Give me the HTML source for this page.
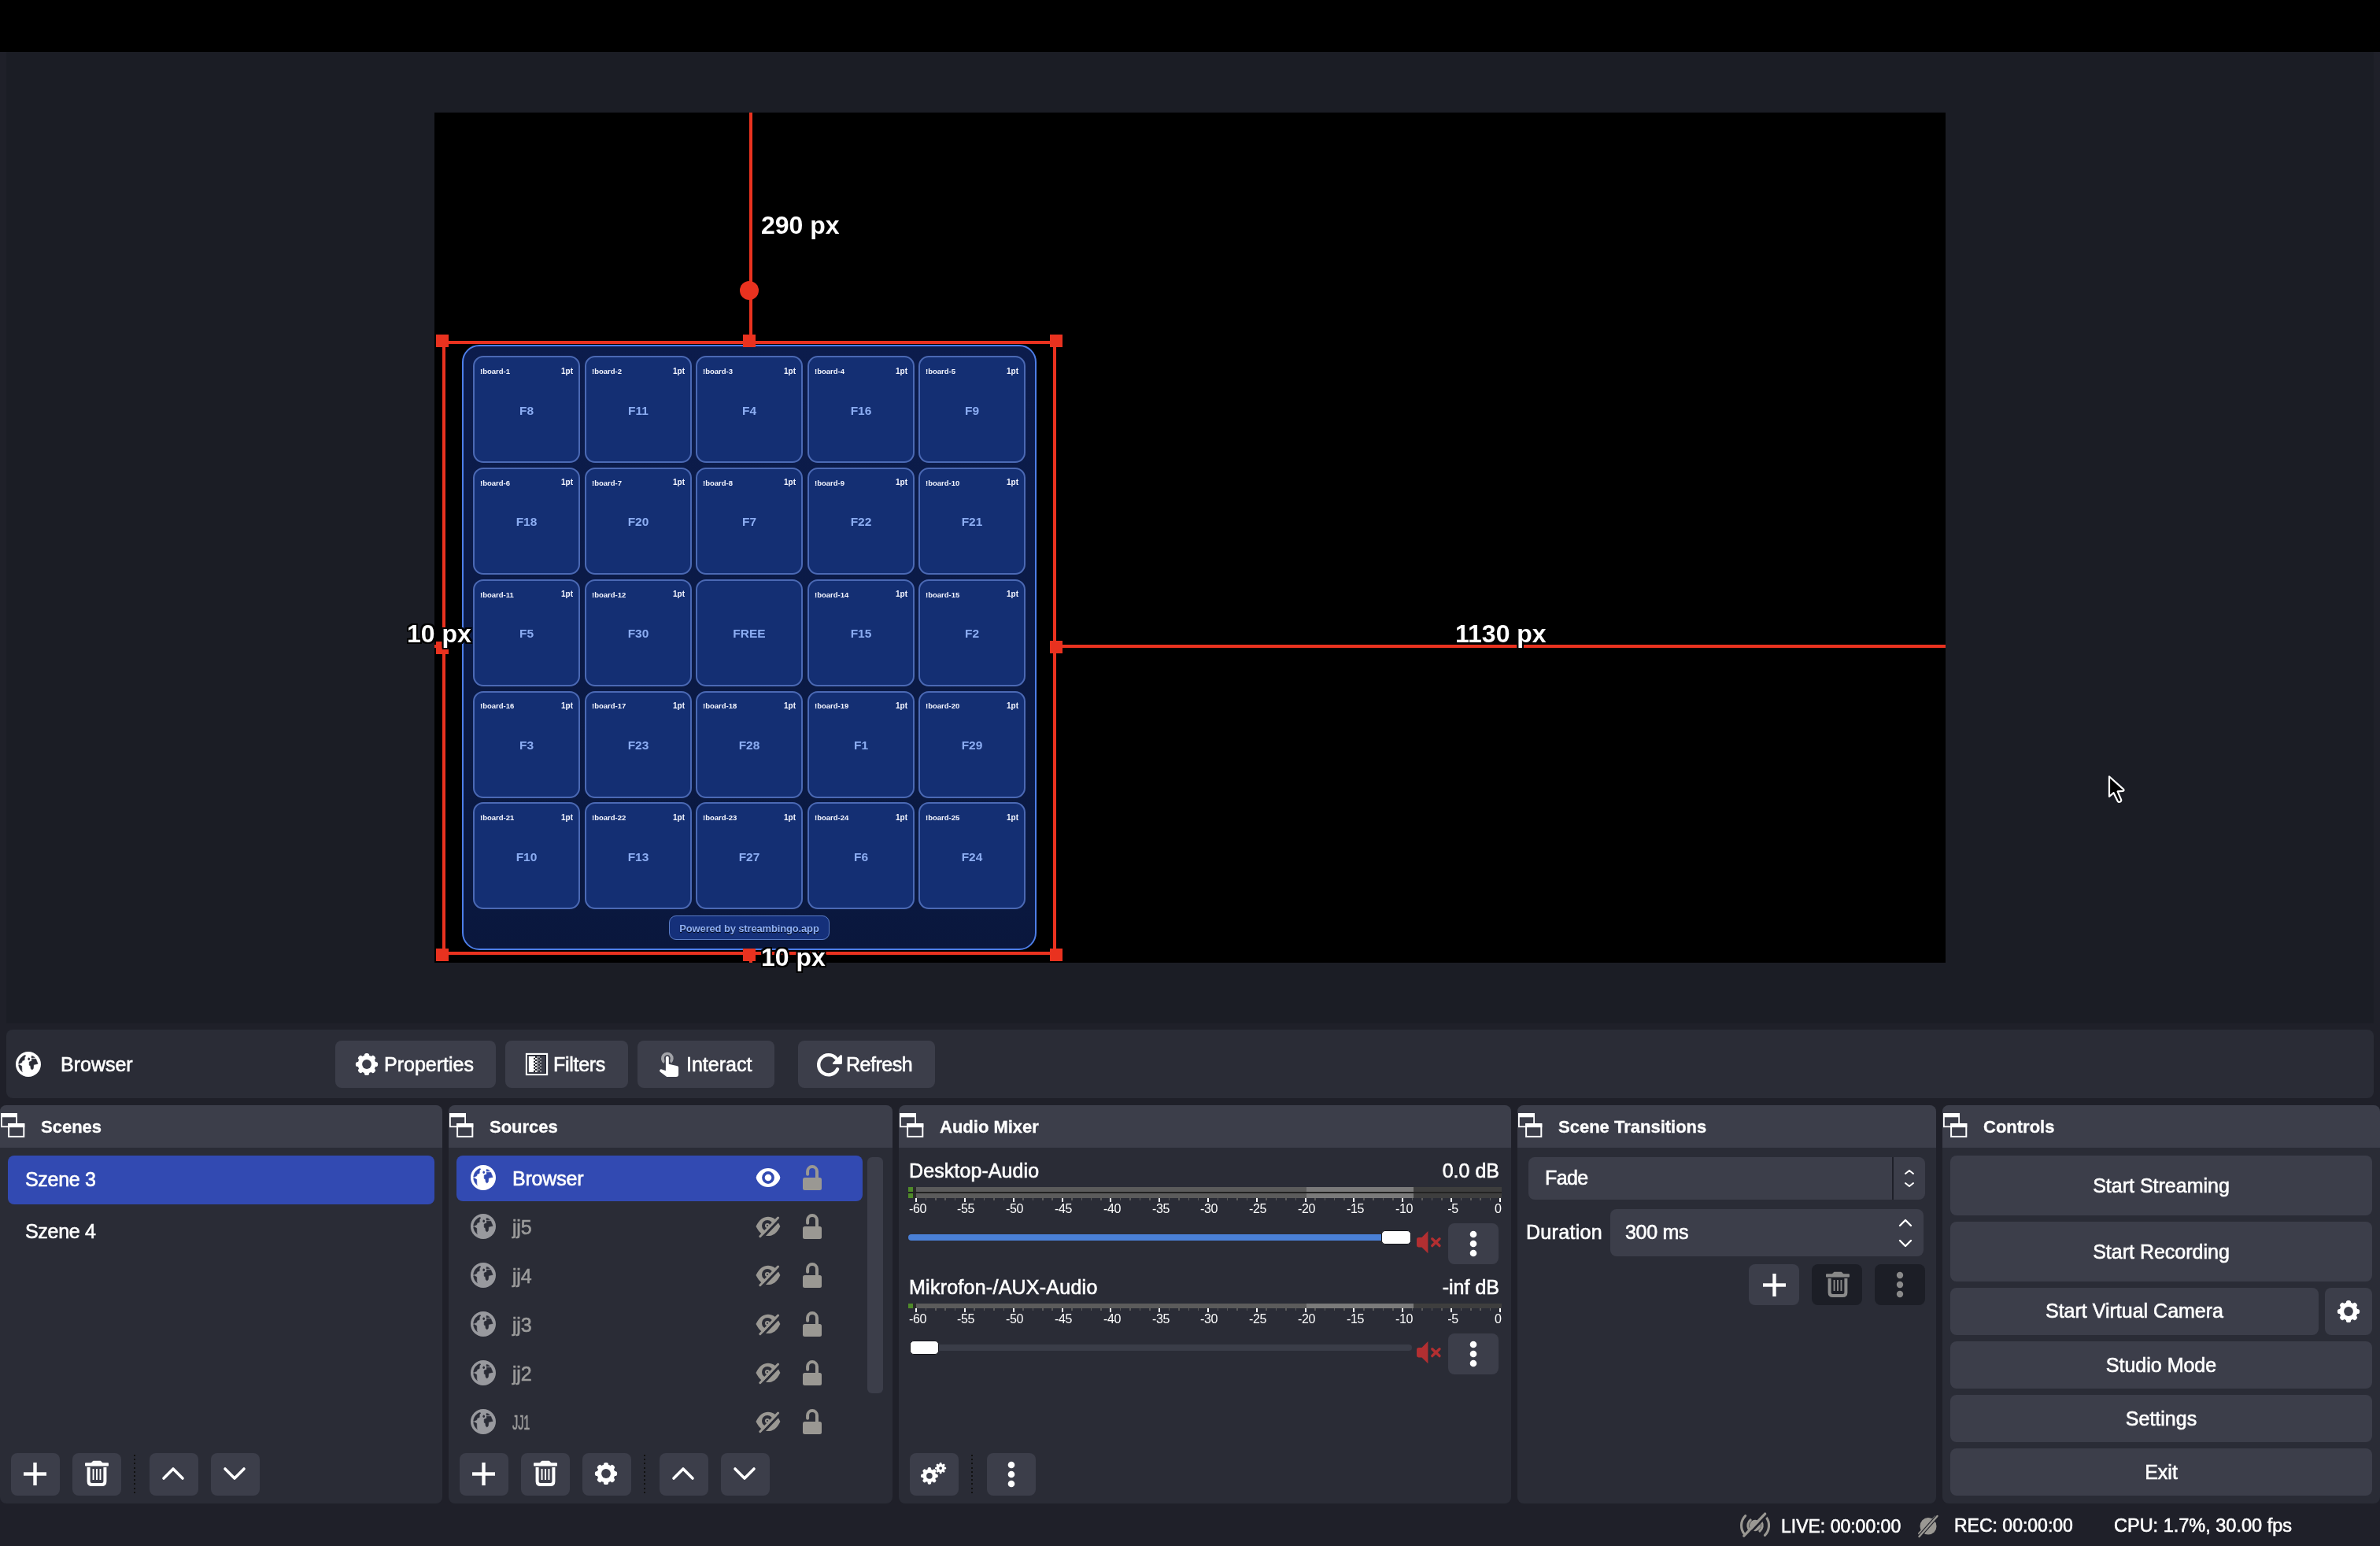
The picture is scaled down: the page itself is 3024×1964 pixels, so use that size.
<!DOCTYPE html><html><head><meta charset="utf-8"><style>
html,body{margin:0;padding:0;}
body{width:3024px;height:1964px;overflow:hidden;position:relative;background:#1f2029;font-family:'Liberation Sans', sans-serif;}
div,svg{box-sizing:border-box;}
</style></head><body>
<div style="position:absolute;left:0px;top:0px;width:3024px;height:66px;background:#000;border-radius:0px;"></div>
<div style="position:absolute;left:8px;top:66px;width:3008px;height:1234px;background:#1b1d25;border-radius:0px;"></div>
<div style="position:absolute;left:552px;top:143px;width:1920px;height:1080px;background:#000;border-radius:0px;"></div>
<div style="position:absolute;left:587px;top:438px;width:730px;height:769px;border:2.5px solid #4d7ee8;border-radius:22px;background:linear-gradient(#0c1c4c,#0a1941 85%,#0a173d);"></div>
<div style="position:absolute;left:601.0px;top:452.4px;width:136px;height:136px;border:2px solid #4b69b4;border-radius:13px;background:#142f73;"></div>
<div style="position:absolute;left:610.0px;top:467.16px;font:bold 9.5px/9.5px 'Liberation Sans', sans-serif;color:#f4f6ff;white-space:nowrap;will-change:transform;">!board-1</div>
<div style="position:absolute;left:128.0px;width:600px;top:466.74px;font:bold 10px/10px 'Liberation Sans', sans-serif;color:#f4f6ff;text-align:right;white-space:nowrap;will-change:transform;">1pt</div>
<div style="position:absolute;left:269.0px;width:800px;top:513.78px;font:bold 15.5px/15.5px 'Liberation Sans', sans-serif;color:#8cadf2;text-align:center;white-space:nowrap;will-change:transform;">F8</div>
<div style="position:absolute;left:742.5px;top:452.4px;width:136px;height:136px;border:2px solid #4b69b4;border-radius:13px;background:#142f73;"></div>
<div style="position:absolute;left:751.5px;top:467.16px;font:bold 9.5px/9.5px 'Liberation Sans', sans-serif;color:#f4f6ff;white-space:nowrap;will-change:transform;">!board-2</div>
<div style="position:absolute;left:269.5px;width:600px;top:466.74px;font:bold 10px/10px 'Liberation Sans', sans-serif;color:#f4f6ff;text-align:right;white-space:nowrap;will-change:transform;">1pt</div>
<div style="position:absolute;left:410.5px;width:800px;top:513.78px;font:bold 15.5px/15.5px 'Liberation Sans', sans-serif;color:#8cadf2;text-align:center;white-space:nowrap;will-change:transform;">F11</div>
<div style="position:absolute;left:884.0px;top:452.4px;width:136px;height:136px;border:2px solid #4b69b4;border-radius:13px;background:#142f73;"></div>
<div style="position:absolute;left:893.0px;top:467.16px;font:bold 9.5px/9.5px 'Liberation Sans', sans-serif;color:#f4f6ff;white-space:nowrap;will-change:transform;">!board-3</div>
<div style="position:absolute;left:411.0px;width:600px;top:466.74px;font:bold 10px/10px 'Liberation Sans', sans-serif;color:#f4f6ff;text-align:right;white-space:nowrap;will-change:transform;">1pt</div>
<div style="position:absolute;left:552.0px;width:800px;top:513.78px;font:bold 15.5px/15.5px 'Liberation Sans', sans-serif;color:#8cadf2;text-align:center;white-space:nowrap;will-change:transform;">F4</div>
<div style="position:absolute;left:1025.5px;top:452.4px;width:136px;height:136px;border:2px solid #4b69b4;border-radius:13px;background:#142f73;"></div>
<div style="position:absolute;left:1034.5px;top:467.16px;font:bold 9.5px/9.5px 'Liberation Sans', sans-serif;color:#f4f6ff;white-space:nowrap;will-change:transform;">!board-4</div>
<div style="position:absolute;left:552.5px;width:600px;top:466.74px;font:bold 10px/10px 'Liberation Sans', sans-serif;color:#f4f6ff;text-align:right;white-space:nowrap;will-change:transform;">1pt</div>
<div style="position:absolute;left:693.5px;width:800px;top:513.78px;font:bold 15.5px/15.5px 'Liberation Sans', sans-serif;color:#8cadf2;text-align:center;white-space:nowrap;will-change:transform;">F16</div>
<div style="position:absolute;left:1167.0px;top:452.4px;width:136px;height:136px;border:2px solid #4b69b4;border-radius:13px;background:#142f73;"></div>
<div style="position:absolute;left:1176.0px;top:467.16px;font:bold 9.5px/9.5px 'Liberation Sans', sans-serif;color:#f4f6ff;white-space:nowrap;will-change:transform;">!board-5</div>
<div style="position:absolute;left:694.0px;width:600px;top:466.74px;font:bold 10px/10px 'Liberation Sans', sans-serif;color:#f4f6ff;text-align:right;white-space:nowrap;will-change:transform;">1pt</div>
<div style="position:absolute;left:835.0px;width:800px;top:513.78px;font:bold 15.5px/15.5px 'Liberation Sans', sans-serif;color:#8cadf2;text-align:center;white-space:nowrap;will-change:transform;">F9</div>
<div style="position:absolute;left:601.0px;top:594.1px;width:136px;height:136px;border:2px solid #4b69b4;border-radius:13px;background:#142f73;"></div>
<div style="position:absolute;left:610.0px;top:608.86px;font:bold 9.5px/9.5px 'Liberation Sans', sans-serif;color:#f4f6ff;white-space:nowrap;will-change:transform;">!board-6</div>
<div style="position:absolute;left:128.0px;width:600px;top:608.43px;font:bold 10px/10px 'Liberation Sans', sans-serif;color:#f4f6ff;text-align:right;white-space:nowrap;will-change:transform;">1pt</div>
<div style="position:absolute;left:269.0px;width:800px;top:655.48px;font:bold 15.5px/15.5px 'Liberation Sans', sans-serif;color:#8cadf2;text-align:center;white-space:nowrap;will-change:transform;">F18</div>
<div style="position:absolute;left:742.5px;top:594.1px;width:136px;height:136px;border:2px solid #4b69b4;border-radius:13px;background:#142f73;"></div>
<div style="position:absolute;left:751.5px;top:608.86px;font:bold 9.5px/9.5px 'Liberation Sans', sans-serif;color:#f4f6ff;white-space:nowrap;will-change:transform;">!board-7</div>
<div style="position:absolute;left:269.5px;width:600px;top:608.43px;font:bold 10px/10px 'Liberation Sans', sans-serif;color:#f4f6ff;text-align:right;white-space:nowrap;will-change:transform;">1pt</div>
<div style="position:absolute;left:410.5px;width:800px;top:655.48px;font:bold 15.5px/15.5px 'Liberation Sans', sans-serif;color:#8cadf2;text-align:center;white-space:nowrap;will-change:transform;">F20</div>
<div style="position:absolute;left:884.0px;top:594.1px;width:136px;height:136px;border:2px solid #4b69b4;border-radius:13px;background:#142f73;"></div>
<div style="position:absolute;left:893.0px;top:608.86px;font:bold 9.5px/9.5px 'Liberation Sans', sans-serif;color:#f4f6ff;white-space:nowrap;will-change:transform;">!board-8</div>
<div style="position:absolute;left:411.0px;width:600px;top:608.43px;font:bold 10px/10px 'Liberation Sans', sans-serif;color:#f4f6ff;text-align:right;white-space:nowrap;will-change:transform;">1pt</div>
<div style="position:absolute;left:552.0px;width:800px;top:655.48px;font:bold 15.5px/15.5px 'Liberation Sans', sans-serif;color:#8cadf2;text-align:center;white-space:nowrap;will-change:transform;">F7</div>
<div style="position:absolute;left:1025.5px;top:594.1px;width:136px;height:136px;border:2px solid #4b69b4;border-radius:13px;background:#142f73;"></div>
<div style="position:absolute;left:1034.5px;top:608.86px;font:bold 9.5px/9.5px 'Liberation Sans', sans-serif;color:#f4f6ff;white-space:nowrap;will-change:transform;">!board-9</div>
<div style="position:absolute;left:552.5px;width:600px;top:608.43px;font:bold 10px/10px 'Liberation Sans', sans-serif;color:#f4f6ff;text-align:right;white-space:nowrap;will-change:transform;">1pt</div>
<div style="position:absolute;left:693.5px;width:800px;top:655.48px;font:bold 15.5px/15.5px 'Liberation Sans', sans-serif;color:#8cadf2;text-align:center;white-space:nowrap;will-change:transform;">F22</div>
<div style="position:absolute;left:1167.0px;top:594.1px;width:136px;height:136px;border:2px solid #4b69b4;border-radius:13px;background:#142f73;"></div>
<div style="position:absolute;left:1176.0px;top:608.86px;font:bold 9.5px/9.5px 'Liberation Sans', sans-serif;color:#f4f6ff;white-space:nowrap;will-change:transform;">!board-10</div>
<div style="position:absolute;left:694.0px;width:600px;top:608.43px;font:bold 10px/10px 'Liberation Sans', sans-serif;color:#f4f6ff;text-align:right;white-space:nowrap;will-change:transform;">1pt</div>
<div style="position:absolute;left:835.0px;width:800px;top:655.48px;font:bold 15.5px/15.5px 'Liberation Sans', sans-serif;color:#8cadf2;text-align:center;white-space:nowrap;will-change:transform;">F21</div>
<div style="position:absolute;left:601.0px;top:735.8px;width:136px;height:136px;border:2px solid #4b69b4;border-radius:13px;background:#142f73;"></div>
<div style="position:absolute;left:610.0px;top:750.56px;font:bold 9.5px/9.5px 'Liberation Sans', sans-serif;color:#f4f6ff;white-space:nowrap;will-change:transform;">!board-11</div>
<div style="position:absolute;left:128.0px;width:600px;top:750.13px;font:bold 10px/10px 'Liberation Sans', sans-serif;color:#f4f6ff;text-align:right;white-space:nowrap;will-change:transform;">1pt</div>
<div style="position:absolute;left:269.0px;width:800px;top:797.18px;font:bold 15.5px/15.5px 'Liberation Sans', sans-serif;color:#8cadf2;text-align:center;white-space:nowrap;will-change:transform;">F5</div>
<div style="position:absolute;left:742.5px;top:735.8px;width:136px;height:136px;border:2px solid #4b69b4;border-radius:13px;background:#142f73;"></div>
<div style="position:absolute;left:751.5px;top:750.56px;font:bold 9.5px/9.5px 'Liberation Sans', sans-serif;color:#f4f6ff;white-space:nowrap;will-change:transform;">!board-12</div>
<div style="position:absolute;left:269.5px;width:600px;top:750.13px;font:bold 10px/10px 'Liberation Sans', sans-serif;color:#f4f6ff;text-align:right;white-space:nowrap;will-change:transform;">1pt</div>
<div style="position:absolute;left:410.5px;width:800px;top:797.18px;font:bold 15.5px/15.5px 'Liberation Sans', sans-serif;color:#8cadf2;text-align:center;white-space:nowrap;will-change:transform;">F30</div>
<div style="position:absolute;left:884.0px;top:735.8px;width:136px;height:136px;border:2px solid #4b69b4;border-radius:13px;background:#142f73;"></div>
<div style="position:absolute;left:552.0px;width:800px;top:797.18px;font:bold 15.5px/15.5px 'Liberation Sans', sans-serif;color:#8cadf2;text-align:center;white-space:nowrap;will-change:transform;">FREE</div>
<div style="position:absolute;left:1025.5px;top:735.8px;width:136px;height:136px;border:2px solid #4b69b4;border-radius:13px;background:#142f73;"></div>
<div style="position:absolute;left:1034.5px;top:750.56px;font:bold 9.5px/9.5px 'Liberation Sans', sans-serif;color:#f4f6ff;white-space:nowrap;will-change:transform;">!board-14</div>
<div style="position:absolute;left:552.5px;width:600px;top:750.13px;font:bold 10px/10px 'Liberation Sans', sans-serif;color:#f4f6ff;text-align:right;white-space:nowrap;will-change:transform;">1pt</div>
<div style="position:absolute;left:693.5px;width:800px;top:797.18px;font:bold 15.5px/15.5px 'Liberation Sans', sans-serif;color:#8cadf2;text-align:center;white-space:nowrap;will-change:transform;">F15</div>
<div style="position:absolute;left:1167.0px;top:735.8px;width:136px;height:136px;border:2px solid #4b69b4;border-radius:13px;background:#142f73;"></div>
<div style="position:absolute;left:1176.0px;top:750.56px;font:bold 9.5px/9.5px 'Liberation Sans', sans-serif;color:#f4f6ff;white-space:nowrap;will-change:transform;">!board-15</div>
<div style="position:absolute;left:694.0px;width:600px;top:750.13px;font:bold 10px/10px 'Liberation Sans', sans-serif;color:#f4f6ff;text-align:right;white-space:nowrap;will-change:transform;">1pt</div>
<div style="position:absolute;left:835.0px;width:800px;top:797.18px;font:bold 15.5px/15.5px 'Liberation Sans', sans-serif;color:#8cadf2;text-align:center;white-space:nowrap;will-change:transform;">F2</div>
<div style="position:absolute;left:601.0px;top:877.5px;width:136px;height:136px;border:2px solid #4b69b4;border-radius:13px;background:#142f73;"></div>
<div style="position:absolute;left:610.0px;top:892.26px;font:bold 9.5px/9.5px 'Liberation Sans', sans-serif;color:#f4f6ff;white-space:nowrap;will-change:transform;">!board-16</div>
<div style="position:absolute;left:128.0px;width:600px;top:891.83px;font:bold 10px/10px 'Liberation Sans', sans-serif;color:#f4f6ff;text-align:right;white-space:nowrap;will-change:transform;">1pt</div>
<div style="position:absolute;left:269.0px;width:800px;top:938.88px;font:bold 15.5px/15.5px 'Liberation Sans', sans-serif;color:#8cadf2;text-align:center;white-space:nowrap;will-change:transform;">F3</div>
<div style="position:absolute;left:742.5px;top:877.5px;width:136px;height:136px;border:2px solid #4b69b4;border-radius:13px;background:#142f73;"></div>
<div style="position:absolute;left:751.5px;top:892.26px;font:bold 9.5px/9.5px 'Liberation Sans', sans-serif;color:#f4f6ff;white-space:nowrap;will-change:transform;">!board-17</div>
<div style="position:absolute;left:269.5px;width:600px;top:891.83px;font:bold 10px/10px 'Liberation Sans', sans-serif;color:#f4f6ff;text-align:right;white-space:nowrap;will-change:transform;">1pt</div>
<div style="position:absolute;left:410.5px;width:800px;top:938.88px;font:bold 15.5px/15.5px 'Liberation Sans', sans-serif;color:#8cadf2;text-align:center;white-space:nowrap;will-change:transform;">F23</div>
<div style="position:absolute;left:884.0px;top:877.5px;width:136px;height:136px;border:2px solid #4b69b4;border-radius:13px;background:#142f73;"></div>
<div style="position:absolute;left:893.0px;top:892.26px;font:bold 9.5px/9.5px 'Liberation Sans', sans-serif;color:#f4f6ff;white-space:nowrap;will-change:transform;">!board-18</div>
<div style="position:absolute;left:411.0px;width:600px;top:891.83px;font:bold 10px/10px 'Liberation Sans', sans-serif;color:#f4f6ff;text-align:right;white-space:nowrap;will-change:transform;">1pt</div>
<div style="position:absolute;left:552.0px;width:800px;top:938.88px;font:bold 15.5px/15.5px 'Liberation Sans', sans-serif;color:#8cadf2;text-align:center;white-space:nowrap;will-change:transform;">F28</div>
<div style="position:absolute;left:1025.5px;top:877.5px;width:136px;height:136px;border:2px solid #4b69b4;border-radius:13px;background:#142f73;"></div>
<div style="position:absolute;left:1034.5px;top:892.26px;font:bold 9.5px/9.5px 'Liberation Sans', sans-serif;color:#f4f6ff;white-space:nowrap;will-change:transform;">!board-19</div>
<div style="position:absolute;left:552.5px;width:600px;top:891.83px;font:bold 10px/10px 'Liberation Sans', sans-serif;color:#f4f6ff;text-align:right;white-space:nowrap;will-change:transform;">1pt</div>
<div style="position:absolute;left:693.5px;width:800px;top:938.88px;font:bold 15.5px/15.5px 'Liberation Sans', sans-serif;color:#8cadf2;text-align:center;white-space:nowrap;will-change:transform;">F1</div>
<div style="position:absolute;left:1167.0px;top:877.5px;width:136px;height:136px;border:2px solid #4b69b4;border-radius:13px;background:#142f73;"></div>
<div style="position:absolute;left:1176.0px;top:892.26px;font:bold 9.5px/9.5px 'Liberation Sans', sans-serif;color:#f4f6ff;white-space:nowrap;will-change:transform;">!board-20</div>
<div style="position:absolute;left:694.0px;width:600px;top:891.83px;font:bold 10px/10px 'Liberation Sans', sans-serif;color:#f4f6ff;text-align:right;white-space:nowrap;will-change:transform;">1pt</div>
<div style="position:absolute;left:835.0px;width:800px;top:938.88px;font:bold 15.5px/15.5px 'Liberation Sans', sans-serif;color:#8cadf2;text-align:center;white-space:nowrap;will-change:transform;">F29</div>
<div style="position:absolute;left:601.0px;top:1019.2px;width:136px;height:136px;border:2px solid #4b69b4;border-radius:13px;background:#142f73;"></div>
<div style="position:absolute;left:610.0px;top:1033.96px;font:bold 9.5px/9.5px 'Liberation Sans', sans-serif;color:#f4f6ff;white-space:nowrap;will-change:transform;">!board-21</div>
<div style="position:absolute;left:128.0px;width:600px;top:1033.54px;font:bold 10px/10px 'Liberation Sans', sans-serif;color:#f4f6ff;text-align:right;white-space:nowrap;will-change:transform;">1pt</div>
<div style="position:absolute;left:269.0px;width:800px;top:1080.58px;font:bold 15.5px/15.5px 'Liberation Sans', sans-serif;color:#8cadf2;text-align:center;white-space:nowrap;will-change:transform;">F10</div>
<div style="position:absolute;left:742.5px;top:1019.2px;width:136px;height:136px;border:2px solid #4b69b4;border-radius:13px;background:#142f73;"></div>
<div style="position:absolute;left:751.5px;top:1033.96px;font:bold 9.5px/9.5px 'Liberation Sans', sans-serif;color:#f4f6ff;white-space:nowrap;will-change:transform;">!board-22</div>
<div style="position:absolute;left:269.5px;width:600px;top:1033.54px;font:bold 10px/10px 'Liberation Sans', sans-serif;color:#f4f6ff;text-align:right;white-space:nowrap;will-change:transform;">1pt</div>
<div style="position:absolute;left:410.5px;width:800px;top:1080.58px;font:bold 15.5px/15.5px 'Liberation Sans', sans-serif;color:#8cadf2;text-align:center;white-space:nowrap;will-change:transform;">F13</div>
<div style="position:absolute;left:884.0px;top:1019.2px;width:136px;height:136px;border:2px solid #4b69b4;border-radius:13px;background:#142f73;"></div>
<div style="position:absolute;left:893.0px;top:1033.96px;font:bold 9.5px/9.5px 'Liberation Sans', sans-serif;color:#f4f6ff;white-space:nowrap;will-change:transform;">!board-23</div>
<div style="position:absolute;left:411.0px;width:600px;top:1033.54px;font:bold 10px/10px 'Liberation Sans', sans-serif;color:#f4f6ff;text-align:right;white-space:nowrap;will-change:transform;">1pt</div>
<div style="position:absolute;left:552.0px;width:800px;top:1080.58px;font:bold 15.5px/15.5px 'Liberation Sans', sans-serif;color:#8cadf2;text-align:center;white-space:nowrap;will-change:transform;">F27</div>
<div style="position:absolute;left:1025.5px;top:1019.2px;width:136px;height:136px;border:2px solid #4b69b4;border-radius:13px;background:#142f73;"></div>
<div style="position:absolute;left:1034.5px;top:1033.96px;font:bold 9.5px/9.5px 'Liberation Sans', sans-serif;color:#f4f6ff;white-space:nowrap;will-change:transform;">!board-24</div>
<div style="position:absolute;left:552.5px;width:600px;top:1033.54px;font:bold 10px/10px 'Liberation Sans', sans-serif;color:#f4f6ff;text-align:right;white-space:nowrap;will-change:transform;">1pt</div>
<div style="position:absolute;left:693.5px;width:800px;top:1080.58px;font:bold 15.5px/15.5px 'Liberation Sans', sans-serif;color:#8cadf2;text-align:center;white-space:nowrap;will-change:transform;">F6</div>
<div style="position:absolute;left:1167.0px;top:1019.2px;width:136px;height:136px;border:2px solid #4b69b4;border-radius:13px;background:#142f73;"></div>
<div style="position:absolute;left:1176.0px;top:1033.96px;font:bold 9.5px/9.5px 'Liberation Sans', sans-serif;color:#f4f6ff;white-space:nowrap;will-change:transform;">!board-25</div>
<div style="position:absolute;left:694.0px;width:600px;top:1033.54px;font:bold 10px/10px 'Liberation Sans', sans-serif;color:#f4f6ff;text-align:right;white-space:nowrap;will-change:transform;">1pt</div>
<div style="position:absolute;left:835.0px;width:800px;top:1080.58px;font:bold 15.5px/15.5px 'Liberation Sans', sans-serif;color:#8cadf2;text-align:center;white-space:nowrap;will-change:transform;">F24</div>
<div style="position:absolute;left:850px;top:1163px;width:204px;height:31px;border:1.5px solid #5a7cc6;border-radius:9px;background:#15307a;"></div>
<div style="position:absolute;left:552px;width:800px;top:1173.00px;font:bold 13px/13px 'Liberation Sans', sans-serif;color:#8fb0f5;text-align:center;white-space:nowrap;will-change:transform;letter-spacing:-0.15px;text-shadow:0 1px 1px #000;">Powered by streambingo.app</div>
<div style="position:absolute;left:952px;top:143px;width:4px;height:294px;background:#e9321f;border-radius:0px;"></div>
<div style="position:absolute;left:940px;top:357px;width:24px;height:24px;border-radius:50%;background:#e9321f;"></div>
<div style="position:absolute;left:562px;top:433px;width:780px;height:4px;background:#e9321f;border-radius:0px;"></div>
<div style="position:absolute;left:562px;top:433px;width:4px;height:780px;background:#e9321f;border-radius:0px;"></div>
<div style="position:absolute;left:1338px;top:433px;width:4px;height:780px;background:#e9321f;border-radius:0px;"></div>
<div style="position:absolute;left:562px;top:1209px;width:780px;height:4px;background:#e9321f;border-radius:0px;"></div>
<div style="position:absolute;left:1342px;top:818.5px;width:1130px;height:4.0px;background:#e9321f;border-radius:0px;"></div>
<div style="position:absolute;left:552px;top:818.5px;width:10px;height:4.0px;background:#e9321f;border-radius:0px;"></div>
<div style="position:absolute;left:952px;top:1213px;width:4px;height:10px;background:#e9321f;border-radius:0px;"></div>
<div style="position:absolute;left:554px;top:425px;width:16px;height:16px;background:#e9321f;border-radius:0px;"></div>
<div style="position:absolute;left:944px;top:425px;width:16px;height:16px;background:#e9321f;border-radius:0px;"></div>
<div style="position:absolute;left:1334px;top:425px;width:16px;height:16px;background:#e9321f;border-radius:0px;"></div>
<div style="position:absolute;left:554px;top:815px;width:16px;height:16px;background:#e9321f;border-radius:0px;"></div>
<div style="position:absolute;left:1334px;top:814px;width:16px;height:16px;background:#e9321f;border-radius:0px;"></div>
<div style="position:absolute;left:554px;top:1205px;width:16px;height:16px;background:#e9321f;border-radius:0px;"></div>
<div style="position:absolute;left:944px;top:1205px;width:16px;height:16px;background:#e9321f;border-radius:0px;"></div>
<div style="position:absolute;left:1334px;top:1205px;width:16px;height:16px;background:#e9321f;border-radius:0px;"></div>
<div style="position:absolute;left:967px;top:270.41px;font:bold 32px/32px 'Liberation Sans', sans-serif;color:#fff;white-space:nowrap;will-change:transform;text-shadow:-2px -2px 0 #000,2px -2px 0 #000,-2px 2px 0 #000,2px 2px 0 #000,0 -2px 0 #000,0 2px 0 #000,-2px 0 0 #000,2px 0 0 #000;">290 px</div>
<div style="position:absolute;left:516.5px;top:789.11px;font:bold 32px/32px 'Liberation Sans', sans-serif;color:#fff;white-space:nowrap;will-change:transform;text-shadow:-2px -2px 0 #000,2px -2px 0 #000,-2px 2px 0 #000,2px 2px 0 #000,0 -2px 0 #000,0 2px 0 #000,-2px 0 0 #000,2px 0 0 #000;">10 px</div>
<div style="position:absolute;left:1849px;top:789.31px;font:bold 32px/32px 'Liberation Sans', sans-serif;color:#fff;white-space:nowrap;will-change:transform;text-shadow:-2px -2px 0 #000,2px -2px 0 #000,-2px 2px 0 #000,2px 2px 0 #000,0 -2px 0 #000,0 2px 0 #000,-2px 0 0 #000,2px 0 0 #000;">1130 px</div>
<div style="position:absolute;left:967px;top:1199.91px;font:bold 32px/32px 'Liberation Sans', sans-serif;color:#fff;white-space:nowrap;will-change:transform;text-shadow:-2px -2px 0 #000,2px -2px 0 #000,-2px 2px 0 #000,2px 2px 0 #000,0 -2px 0 #000,0 2px 0 #000,-2px 0 0 #000,2px 0 0 #000;">10 px</div>
<svg style="position:absolute;left:2676.6px;top:983.8px;overflow:visible" width="26" height="40" viewBox="0 0 26 40"><path d="M3 2.5 L3 28 L8.6 23.2 L13.6 33.6 Q15 35.6 17 34.6 Q18.8 33.6 18 31.6 L13.6 21.4 L20.4 20.8 Q22.4 20.4 21 18.6 Z" fill="#000" stroke="#fff" stroke-width="2.2" stroke-linejoin="round"/></svg>
<div style="position:absolute;left:8px;top:1308px;width:3008px;height:87px;background:#2a2c36;border-radius:8px;"></div>
<svg style="position:absolute;left:20px;top:1336px;overflow:visible" width="32" height="32" viewBox="0 0 32 32"><circle cx="15.97" cy="15.97" r="16" fill="#fff"/><path d="M12.82 5.06 L11.27 7.13 L11.14 10.49 L8.16 11.78 L7.77 13.85 L4.40 15.20 L3.69 15.33 L3.84 13.94 L4.15 12.58 L4.61 11.26 L5.21 10.01 L5.96 8.83 L6.83 7.74 L7.82 6.76 L8.92 5.89 L10.10 5.16 L11.36 4.57 Z M4.10 16.60 L7.64 18.25 L7.90 24.90 L8.40 25.66 L7.61 24.99 L6.89 24.26 L6.22 23.47 L5.63 22.63 L5.11 21.74 L4.66 20.82 L4.30 19.85 L4.01 18.86 L3.81 17.85 L3.70 16.83 Z M20.06 5.60 L22.13 5.90 L24.30 7.50 L20.06 7.90 Z M20.32 9.20 L25.60 9.20 L28.10 15.40 L22.90 16.44 L22.26 21.60 L20.84 22.90 L19.16 21.60 L18.77 18.00 L17.20 17.20 L17.20 13.10 L20.32 11.78 Z" fill="#2a2c36" stroke="#2a2c36" stroke-width="0.6" stroke-linejoin="round"/><ellipse cx="16.7" cy="9.2" rx="1.3" ry="1.8" fill="#2a2c36"/></svg>
<div style="position:absolute;left:76.5px;top:1340.34px;font:normal 25px/25px 'Liberation Sans', sans-serif;color:#fefefe;white-space:nowrap;will-change:transform;-webkit-text-stroke:0.6px #fefefe;">Browser</div>
<div style="position:absolute;left:426px;top:1322px;width:204px;height:60px;background:#3c3e4a;border-radius:8px;"></div>
<svg style="position:absolute;left:452px;top:1338px;overflow:visible" width="28" height="28" viewBox="0 0 28 28"><g transform="scale(1.0)"><circle cx="14" cy="14" r="11.4" fill="#fff"/><rect x="10.9" y="-0.1" width="6.2" height="8" rx="2.6" fill="#fff" transform="rotate(0 14 14)"/><rect x="10.9" y="-0.1" width="6.2" height="8" rx="2.6" fill="#fff" transform="rotate(45 14 14)"/><rect x="10.9" y="-0.1" width="6.2" height="8" rx="2.6" fill="#fff" transform="rotate(90 14 14)"/><rect x="10.9" y="-0.1" width="6.2" height="8" rx="2.6" fill="#fff" transform="rotate(135 14 14)"/><rect x="10.9" y="-0.1" width="6.2" height="8" rx="2.6" fill="#fff" transform="rotate(180 14 14)"/><rect x="10.9" y="-0.1" width="6.2" height="8" rx="2.6" fill="#fff" transform="rotate(225 14 14)"/><rect x="10.9" y="-0.1" width="6.2" height="8" rx="2.6" fill="#fff" transform="rotate(270 14 14)"/><rect x="10.9" y="-0.1" width="6.2" height="8" rx="2.6" fill="#fff" transform="rotate(315 14 14)"/><circle cx="14" cy="14" r="5.9" fill="#3c3e4a"/></g></svg>
<div style="position:absolute;left:487.6px;top:1339.54px;font:normal 25px/25px 'Liberation Sans', sans-serif;color:#fefefe;white-space:nowrap;will-change:transform;-webkit-text-stroke:0.6px #fefefe;">Properties</div>
<div style="position:absolute;left:642px;top:1322px;width:156px;height:60px;background:#3c3e4a;border-radius:8px;"></div>
<svg style="position:absolute;left:664px;top:1334px;overflow:visible" width="36" height="36" viewBox="0 0 36 36"><rect x="5" y="5" width="26" height="26" fill="none" stroke="#fff" stroke-width="2.3"/><rect x="6.6" y="6.6" width="22.8" height="22.8" fill="none" stroke="#1e2029" stroke-width="1.1"/><rect x="7.9" y="7.9" width="6.1" height="20" fill="#fff"/><rect x="14" y="7.9" width="2" height="2" fill="#fff"/><rect x="16" y="7.9" width="2" height="2" fill="#15171f"/><rect x="18" y="7.9" width="2" height="2" fill="#88898e"/><rect x="20" y="7.9" width="2" height="2" fill="#88898e"/><rect x="22" y="7.9" width="2" height="2" fill="#2e3039"/><rect x="14" y="9.9" width="2" height="2" fill="#15171f"/><rect x="16" y="9.9" width="2" height="2" fill="#fff"/><rect x="18" y="9.9" width="2" height="2" fill="#88898e"/><rect x="20" y="9.9" width="2" height="2" fill="#2a2c36"/><rect x="22" y="9.9" width="2" height="2" fill="#9a9ba0"/><rect x="14" y="11.9" width="2" height="2" fill="#fff"/><rect x="16" y="11.9" width="2" height="2" fill="#15171f"/><rect x="18" y="11.9" width="2" height="2" fill="#88898e"/><rect x="20" y="11.9" width="2" height="2" fill="#88898e"/><rect x="22" y="11.9" width="2" height="2" fill="#2e3039"/><rect x="14" y="13.9" width="2" height="2" fill="#15171f"/><rect x="16" y="13.9" width="2" height="2" fill="#fff"/><rect x="18" y="13.9" width="2" height="2" fill="#88898e"/><rect x="20" y="13.9" width="2" height="2" fill="#2a2c36"/><rect x="22" y="13.9" width="2" height="2" fill="#9a9ba0"/><rect x="14" y="15.9" width="2" height="2" fill="#fff"/><rect x="16" y="15.9" width="2" height="2" fill="#15171f"/><rect x="18" y="15.9" width="2" height="2" fill="#88898e"/><rect x="20" y="15.9" width="2" height="2" fill="#88898e"/><rect x="22" y="15.9" width="2" height="2" fill="#2e3039"/><rect x="14" y="17.9" width="2" height="2" fill="#15171f"/><rect x="16" y="17.9" width="2" height="2" fill="#fff"/><rect x="18" y="17.9" width="2" height="2" fill="#88898e"/><rect x="20" y="17.9" width="2" height="2" fill="#2a2c36"/><rect x="22" y="17.9" width="2" height="2" fill="#9a9ba0"/><rect x="14" y="19.9" width="2" height="2" fill="#fff"/><rect x="16" y="19.9" width="2" height="2" fill="#15171f"/><rect x="18" y="19.9" width="2" height="2" fill="#88898e"/><rect x="20" y="19.9" width="2" height="2" fill="#88898e"/><rect x="22" y="19.9" width="2" height="2" fill="#2e3039"/><rect x="14" y="21.9" width="2" height="2" fill="#15171f"/><rect x="16" y="21.9" width="2" height="2" fill="#fff"/><rect x="18" y="21.9" width="2" height="2" fill="#88898e"/><rect x="20" y="21.9" width="2" height="2" fill="#2a2c36"/><rect x="22" y="21.9" width="2" height="2" fill="#9a9ba0"/><rect x="14" y="23.9" width="2" height="2" fill="#fff"/><rect x="16" y="23.9" width="2" height="2" fill="#15171f"/><rect x="18" y="23.9" width="2" height="2" fill="#88898e"/><rect x="20" y="23.9" width="2" height="2" fill="#88898e"/><rect x="22" y="23.9" width="2" height="2" fill="#2e3039"/><rect x="14" y="25.9" width="2" height="2" fill="#15171f"/><rect x="16" y="25.9" width="2" height="2" fill="#fff"/><rect x="18" y="25.9" width="2" height="2" fill="#88898e"/><rect x="20" y="25.9" width="2" height="2" fill="#2a2c36"/><rect x="22" y="25.9" width="2" height="2" fill="#9a9ba0"/></svg>
<div style="position:absolute;left:702.5px;top:1339.54px;font:normal 25px/25px 'Liberation Sans', sans-serif;color:#fefefe;white-space:nowrap;will-change:transform;-webkit-text-stroke:0.6px #fefefe;letter-spacing:-0.3px;">Filters</div>
<div style="position:absolute;left:810px;top:1322px;width:174px;height:60px;background:#3c3e4a;border-radius:8px;"></div>
<svg style="position:absolute;left:832px;top:1332px;overflow:visible" width="36" height="40" viewBox="0 0 36 40"><path d="M12.4 17.4 A5.9 5.9 0 1 1 19.6 17.1" fill="none" stroke="#a2a3a8" stroke-width="4"/><path d="M13.9 28.2 L13.9 11.6 A1.95 1.95 0 0 1 17.8 11.6 L17.8 19.7" fill="none" stroke="#3c3e4a" stroke-width="3"/><path d="M13.9 28.2 L13.9 11.6 A1.95 1.95 0 0 1 17.8 11.6 L17.8 19.7 L28.8 22.3 Q30.1 22.7 30.1 24.2 L30.1 33 Q30.1 36 27 36 L15.2 36 L6.6 29.6 Q5.6 28.6 6.4 27.2 Q7.4 25.8 8.8 26.4 Z" fill="#fff"/></svg>
<div style="position:absolute;left:871.6px;top:1339.64px;font:normal 25px/25px 'Liberation Sans', sans-serif;color:#fefefe;white-space:nowrap;will-change:transform;-webkit-text-stroke:0.6px #fefefe;">Interact</div>
<div style="position:absolute;left:1014px;top:1322px;width:174px;height:60px;background:#3c3e4a;border-radius:8px;"></div>
<svg style="position:absolute;left:1032px;top:1332px;overflow:visible" width="44" height="40" viewBox="0 0 44 40"><path d="M32.1 26.3 A12.6 12.6 0 1 1 30.2 12.4" fill="none" stroke="#fff" stroke-width="4.4" stroke-linecap="round"/><path d="M36.6 9.4 L36.6 18.8 L27.2 18.8 Z" fill="#fff" stroke="#fff" stroke-width="2.6" stroke-linejoin="round"/></svg>
<div style="position:absolute;left:1074.6px;top:1339.64px;font:normal 25px/25px 'Liberation Sans', sans-serif;color:#fefefe;white-space:nowrap;will-change:transform;-webkit-text-stroke:0.6px #fefefe;letter-spacing:-0.5px;">Refresh</div>
<div style="position:absolute;left:0px;top:1404px;width:562px;height:506px;background:#2a2c36;border-radius:8px;overflow:hidden;"><div style="position:absolute;left:0;top:0;width:100%;height:54px;background:#3c3e4a;"></div></div>
<svg style="position:absolute;left:1px;top:1414px;overflow:visible" width="32" height="32" viewBox="0 0 32 32"><rect x="0.9" y="1" width="19.2" height="16.3" fill="none" stroke="#fff" stroke-width="1.8"/><rect x="0" y="0.4" width="21" height="4.9" fill="#fff"/><rect x="10.1" y="14" width="19.2" height="15.9" fill="#3c3e4a" stroke="#fff" stroke-width="2"/><rect x="9.1" y="13.3" width="21.2" height="4.9" fill="#fff"/></svg>
<div style="position:absolute;left:52px;top:1420.88px;font:bold 22px/22px 'Liberation Sans', sans-serif;color:#fefefe;white-space:nowrap;will-change:transform;-webkit-text-stroke:0.3px #fefefe;">Scenes</div>
<div style="position:absolute;left:570px;top:1404px;width:564px;height:506px;background:#2a2c36;border-radius:8px;overflow:hidden;"><div style="position:absolute;left:0;top:0;width:100%;height:54px;background:#3c3e4a;"></div></div>
<svg style="position:absolute;left:571px;top:1414px;overflow:visible" width="32" height="32" viewBox="0 0 32 32"><rect x="0.9" y="1" width="19.2" height="16.3" fill="none" stroke="#fff" stroke-width="1.8"/><rect x="0" y="0.4" width="21" height="4.9" fill="#fff"/><rect x="10.1" y="14" width="19.2" height="15.9" fill="#3c3e4a" stroke="#fff" stroke-width="2"/><rect x="9.1" y="13.3" width="21.2" height="4.9" fill="#fff"/></svg>
<div style="position:absolute;left:622px;top:1420.88px;font:bold 22px/22px 'Liberation Sans', sans-serif;color:#fefefe;white-space:nowrap;will-change:transform;-webkit-text-stroke:0.3px #fefefe;">Sources</div>
<div style="position:absolute;left:1142px;top:1404px;width:778px;height:506px;background:#2a2c36;border-radius:8px;overflow:hidden;"><div style="position:absolute;left:0;top:0;width:100%;height:54px;background:#3c3e4a;"></div></div>
<svg style="position:absolute;left:1143px;top:1414px;overflow:visible" width="32" height="32" viewBox="0 0 32 32"><rect x="0.9" y="1" width="19.2" height="16.3" fill="none" stroke="#fff" stroke-width="1.8"/><rect x="0" y="0.4" width="21" height="4.9" fill="#fff"/><rect x="10.1" y="14" width="19.2" height="15.9" fill="#3c3e4a" stroke="#fff" stroke-width="2"/><rect x="9.1" y="13.3" width="21.2" height="4.9" fill="#fff"/></svg>
<div style="position:absolute;left:1194px;top:1420.88px;font:bold 22px/22px 'Liberation Sans', sans-serif;color:#fefefe;white-space:nowrap;will-change:transform;-webkit-text-stroke:0.3px #fefefe;">Audio Mixer</div>
<div style="position:absolute;left:1928px;top:1404px;width:532px;height:506px;background:#2a2c36;border-radius:8px;overflow:hidden;"><div style="position:absolute;left:0;top:0;width:100%;height:54px;background:#3c3e4a;"></div></div>
<svg style="position:absolute;left:1929px;top:1414px;overflow:visible" width="32" height="32" viewBox="0 0 32 32"><rect x="0.9" y="1" width="19.2" height="16.3" fill="none" stroke="#fff" stroke-width="1.8"/><rect x="0" y="0.4" width="21" height="4.9" fill="#fff"/><rect x="10.1" y="14" width="19.2" height="15.9" fill="#3c3e4a" stroke="#fff" stroke-width="2"/><rect x="9.1" y="13.3" width="21.2" height="4.9" fill="#fff"/></svg>
<div style="position:absolute;left:1980px;top:1420.88px;font:bold 22px/22px 'Liberation Sans', sans-serif;color:#fefefe;white-space:nowrap;will-change:transform;-webkit-text-stroke:0.3px #fefefe;">Scene Transitions</div>
<div style="position:absolute;left:2468px;top:1404px;width:556px;height:506px;background:#2a2c36;border-radius:8px;overflow:hidden;"><div style="position:absolute;left:0;top:0;width:100%;height:54px;background:#3c3e4a;"></div></div>
<svg style="position:absolute;left:2469px;top:1414px;overflow:visible" width="32" height="32" viewBox="0 0 32 32"><rect x="0.9" y="1" width="19.2" height="16.3" fill="none" stroke="#fff" stroke-width="1.8"/><rect x="0" y="0.4" width="21" height="4.9" fill="#fff"/><rect x="10.1" y="14" width="19.2" height="15.9" fill="#3c3e4a" stroke="#fff" stroke-width="2"/><rect x="9.1" y="13.3" width="21.2" height="4.9" fill="#fff"/></svg>
<div style="position:absolute;left:2520px;top:1420.88px;font:bold 22px/22px 'Liberation Sans', sans-serif;color:#fefefe;white-space:nowrap;will-change:transform;-webkit-text-stroke:0.3px #fefefe;">Controls</div>
<div style="position:absolute;left:10px;top:1468px;width:542px;height:62px;background:#324ab2;border-radius:8px;"></div>
<div style="position:absolute;left:32.3px;top:1485.84px;font:normal 25px/25px 'Liberation Sans', sans-serif;color:#fefefe;white-space:nowrap;will-change:transform;-webkit-text-stroke:0.6px #fefefe;letter-spacing:-0.3px;">Szene 3</div>
<div style="position:absolute;left:32.3px;top:1552.34px;font:normal 25px/25px 'Liberation Sans', sans-serif;color:#fefefe;white-space:nowrap;will-change:transform;-webkit-text-stroke:0.6px #fefefe;letter-spacing:-0.3px;">Szene 4</div>
<div style="position:absolute;left:14px;top:1846px;width:62px;height:54px;background:#3c3e4a;border-radius:8px;"></div>
<div style="position:absolute;left:92px;top:1846px;width:62px;height:54px;background:#3c3e4a;border-radius:8px;"></div>
<div style="position:absolute;left:190px;top:1846px;width:62px;height:54px;background:#3c3e4a;border-radius:8px;"></div>
<div style="position:absolute;left:268px;top:1846px;width:62px;height:54px;background:#3c3e4a;border-radius:8px;"></div>
<svg style="position:absolute;left:29.5px;top:1857.5px;overflow:visible" width="29" height="29" viewBox="0 0 29 29"><rect x="12.3" y="0" width="4.4" height="29" fill="#fff"/><rect x="0" y="12.3" width="29" height="4.4" fill="#fff"/></svg>
<svg style="position:absolute;left:107.5px;top:1856px;overflow:visible" width="30" height="32" viewBox="0 0 30 32"><path d="M8 2.6 L10.4 0.1 H19.8 L22.2 2.6 Z" fill="#fff" stroke="#fff" stroke-width="0.6" stroke-linejoin="round"/><rect x="0" y="2.3" width="30" height="4.2" rx="1" fill="#fff"/><path d="M4.6 8 V26 Q4.6 30 8.6 30 H21.4 Q25.4 30 25.4 26 V8" fill="none" stroke="#fff" stroke-width="4"/><rect x="9.6" y="10" width="1.9" height="14" fill="#fff"/><rect x="14.05" y="10" width="1.9" height="14" fill="#fff"/><rect x="18.5" y="10" width="1.9" height="14" fill="#fff"/></svg>
<svg style="position:absolute;left:206.0px;top:1864.0px;overflow:visible" width="28" height="16" viewBox="0 0 28 16"><path d="M2 14 L14.0 2 L26 14" fill="none" stroke="#fff" stroke-width="3.6" stroke-linecap="round" stroke-linejoin="round"/></svg>
<svg style="position:absolute;left:284.0px;top:1864.0px;overflow:visible" width="28" height="16" viewBox="0 0 28 16"><path d="M2 2 L14.0 14 L26 2" fill="none" stroke="#fff" stroke-width="3.6" stroke-linecap="round" stroke-linejoin="round"/></svg>
<div style="position:absolute;left:170px;top:1848px;width:2px;height:50px;background:repeating-linear-gradient(#111 0 2px,transparent 2px 5.2px);"></div>
<div style="position:absolute;left:580px;top:1468px;width:516px;height:58px;background:#324ab2;border-radius:8px;"></div>
<svg style="position:absolute;left:598px;top:1480px;overflow:visible" width="32" height="32" viewBox="0 0 32 32"><circle cx="15.97" cy="15.97" r="16" fill="#fff"/><path d="M12.82 5.06 L11.27 7.13 L11.14 10.49 L8.16 11.78 L7.77 13.85 L4.40 15.20 L3.69 15.33 L3.84 13.94 L4.15 12.58 L4.61 11.26 L5.21 10.01 L5.96 8.83 L6.83 7.74 L7.82 6.76 L8.92 5.89 L10.10 5.16 L11.36 4.57 Z M4.10 16.60 L7.64 18.25 L7.90 24.90 L8.40 25.66 L7.61 24.99 L6.89 24.26 L6.22 23.47 L5.63 22.63 L5.11 21.74 L4.66 20.82 L4.30 19.85 L4.01 18.86 L3.81 17.85 L3.70 16.83 Z M20.06 5.60 L22.13 5.90 L24.30 7.50 L20.06 7.90 Z M20.32 9.20 L25.60 9.20 L28.10 15.40 L22.90 16.44 L22.26 21.60 L20.84 22.90 L19.16 21.60 L18.77 18.00 L17.20 17.20 L17.20 13.10 L20.32 11.78 Z" fill="#324ab2" stroke="#324ab2" stroke-width="0.6" stroke-linejoin="round"/><ellipse cx="16.7" cy="9.2" rx="1.3" ry="1.8" fill="#324ab2"/></svg>
<div style="position:absolute;left:650.7px;top:1484.54px;font:normal 25px/25px 'Liberation Sans', sans-serif;color:#fefefe;white-space:nowrap;will-change:transform;-webkit-text-stroke:0.6px #fefefe;letter-spacing:-0.2px;">Browser</div>
<svg style="position:absolute;left:960px;top:1484px;overflow:visible" width="32" height="24" viewBox="0 0 32 24"><path d="M0.6 12 C2.5 4.5 9 0 16 0 C23 0 29.5 4.5 31.4 12 C29.5 19.5 23 24 16 24 C9 24 2.5 19.5 0.6 12 Z" fill="#fff"/><circle cx="16" cy="12" r="7.9" fill="#324ab2"/><circle cx="16" cy="12" r="4.3" fill="#fff"/></svg>
<svg style="position:absolute;left:1020px;top:1480px;overflow:visible" width="24" height="32" viewBox="0 0 24 32"><path d="M6.1 11.8 V8 A5.95 5.95 0 0 1 18 8 V17" fill="none" stroke="#9a9893" stroke-width="4" stroke-linecap="round"/><rect x="0" y="16" width="24" height="16" rx="2.5" fill="#9a9893"/></svg>
<svg style="position:absolute;left:598px;top:1542px;overflow:visible" width="32" height="32" viewBox="0 0 32 32"><circle cx="15.97" cy="15.97" r="16" fill="#98999e"/><path d="M12.82 5.06 L11.27 7.13 L11.14 10.49 L8.16 11.78 L7.77 13.85 L4.40 15.20 L3.69 15.33 L3.84 13.94 L4.15 12.58 L4.61 11.26 L5.21 10.01 L5.96 8.83 L6.83 7.74 L7.82 6.76 L8.92 5.89 L10.10 5.16 L11.36 4.57 Z M4.10 16.60 L7.64 18.25 L7.90 24.90 L8.40 25.66 L7.61 24.99 L6.89 24.26 L6.22 23.47 L5.63 22.63 L5.11 21.74 L4.66 20.82 L4.30 19.85 L4.01 18.86 L3.81 17.85 L3.70 16.83 Z M20.06 5.60 L22.13 5.90 L24.30 7.50 L20.06 7.90 Z M20.32 9.20 L25.60 9.20 L28.10 15.40 L22.90 16.44 L22.26 21.60 L20.84 22.90 L19.16 21.60 L18.77 18.00 L17.20 17.20 L17.20 13.10 L20.32 11.78 Z" fill="#2a2c36" stroke="#2a2c36" stroke-width="0.6" stroke-linejoin="round"/><ellipse cx="16.7" cy="9.2" rx="1.3" ry="1.8" fill="#2a2c36"/></svg>
<div style="position:absolute;left:650.7px;top:1546.54px;font:normal 25px/25px 'Liberation Sans', sans-serif;color:#9b9b9b;white-space:nowrap;will-change:transform;-webkit-text-stroke:0.6px #9b9b9b;letter-spacing:-0.2px;">jj5</div>
<svg style="position:absolute;left:956px;top:1540px;overflow:visible" width="40" height="36" viewBox="0 0 40 36"><defs><mask id="es9561540" maskUnits="userSpaceOnUse" x="-5" y="-5" width="50" height="46"><rect x="-5" y="-5" width="50" height="46" fill="#fff"/><circle cx="19" cy="17" r="5" fill="none" stroke="#000" stroke-width="4"/><path d="M9.8 30.7 L32.6 7 L60 40 Z" fill="#fff"/><path d="M11.96 32.78 L34.76 9.08" stroke="#000" stroke-width="3.2"/></mask></defs><path d="M4.5 17.9 C9 9 14 5.8 19.95 5.8 C26 5.8 31 9 35.4 17.9 C31 26.8 26 30 19.95 30 C14 30 9 26.8 4.5 17.9 Z" fill="#9a9893" mask="url(#es9561540)"/><path d="M9.8 30.7 L32.6 7" stroke="#9a9893" stroke-width="3" stroke-linecap="round"/><rect x="18" y="16" width="1.8" height="1.8" fill="#2a2c36"/></svg>
<svg style="position:absolute;left:1020px;top:1542px;overflow:visible" width="24" height="32" viewBox="0 0 24 32"><path d="M6.1 11.8 V8 A5.95 5.95 0 0 1 18 8 V17" fill="none" stroke="#9a9893" stroke-width="4" stroke-linecap="round"/><rect x="0" y="16" width="24" height="16" rx="2.5" fill="#9a9893"/></svg>
<svg style="position:absolute;left:598px;top:1604px;overflow:visible" width="32" height="32" viewBox="0 0 32 32"><circle cx="15.97" cy="15.97" r="16" fill="#98999e"/><path d="M12.82 5.06 L11.27 7.13 L11.14 10.49 L8.16 11.78 L7.77 13.85 L4.40 15.20 L3.69 15.33 L3.84 13.94 L4.15 12.58 L4.61 11.26 L5.21 10.01 L5.96 8.83 L6.83 7.74 L7.82 6.76 L8.92 5.89 L10.10 5.16 L11.36 4.57 Z M4.10 16.60 L7.64 18.25 L7.90 24.90 L8.40 25.66 L7.61 24.99 L6.89 24.26 L6.22 23.47 L5.63 22.63 L5.11 21.74 L4.66 20.82 L4.30 19.85 L4.01 18.86 L3.81 17.85 L3.70 16.83 Z M20.06 5.60 L22.13 5.90 L24.30 7.50 L20.06 7.90 Z M20.32 9.20 L25.60 9.20 L28.10 15.40 L22.90 16.44 L22.26 21.60 L20.84 22.90 L19.16 21.60 L18.77 18.00 L17.20 17.20 L17.20 13.10 L20.32 11.78 Z" fill="#2a2c36" stroke="#2a2c36" stroke-width="0.6" stroke-linejoin="round"/><ellipse cx="16.7" cy="9.2" rx="1.3" ry="1.8" fill="#2a2c36"/></svg>
<div style="position:absolute;left:650.7px;top:1608.54px;font:normal 25px/25px 'Liberation Sans', sans-serif;color:#9b9b9b;white-space:nowrap;will-change:transform;-webkit-text-stroke:0.6px #9b9b9b;letter-spacing:-0.2px;">jj4</div>
<svg style="position:absolute;left:956px;top:1602px;overflow:visible" width="40" height="36" viewBox="0 0 40 36"><defs><mask id="es9561602" maskUnits="userSpaceOnUse" x="-5" y="-5" width="50" height="46"><rect x="-5" y="-5" width="50" height="46" fill="#fff"/><circle cx="19" cy="17" r="5" fill="none" stroke="#000" stroke-width="4"/><path d="M9.8 30.7 L32.6 7 L60 40 Z" fill="#fff"/><path d="M11.96 32.78 L34.76 9.08" stroke="#000" stroke-width="3.2"/></mask></defs><path d="M4.5 17.9 C9 9 14 5.8 19.95 5.8 C26 5.8 31 9 35.4 17.9 C31 26.8 26 30 19.95 30 C14 30 9 26.8 4.5 17.9 Z" fill="#9a9893" mask="url(#es9561602)"/><path d="M9.8 30.7 L32.6 7" stroke="#9a9893" stroke-width="3" stroke-linecap="round"/><rect x="18" y="16" width="1.8" height="1.8" fill="#2a2c36"/></svg>
<svg style="position:absolute;left:1020px;top:1604px;overflow:visible" width="24" height="32" viewBox="0 0 24 32"><path d="M6.1 11.8 V8 A5.95 5.95 0 0 1 18 8 V17" fill="none" stroke="#9a9893" stroke-width="4" stroke-linecap="round"/><rect x="0" y="16" width="24" height="16" rx="2.5" fill="#9a9893"/></svg>
<svg style="position:absolute;left:598px;top:1666px;overflow:visible" width="32" height="32" viewBox="0 0 32 32"><circle cx="15.97" cy="15.97" r="16" fill="#98999e"/><path d="M12.82 5.06 L11.27 7.13 L11.14 10.49 L8.16 11.78 L7.77 13.85 L4.40 15.20 L3.69 15.33 L3.84 13.94 L4.15 12.58 L4.61 11.26 L5.21 10.01 L5.96 8.83 L6.83 7.74 L7.82 6.76 L8.92 5.89 L10.10 5.16 L11.36 4.57 Z M4.10 16.60 L7.64 18.25 L7.90 24.90 L8.40 25.66 L7.61 24.99 L6.89 24.26 L6.22 23.47 L5.63 22.63 L5.11 21.74 L4.66 20.82 L4.30 19.85 L4.01 18.86 L3.81 17.85 L3.70 16.83 Z M20.06 5.60 L22.13 5.90 L24.30 7.50 L20.06 7.90 Z M20.32 9.20 L25.60 9.20 L28.10 15.40 L22.90 16.44 L22.26 21.60 L20.84 22.90 L19.16 21.60 L18.77 18.00 L17.20 17.20 L17.20 13.10 L20.32 11.78 Z" fill="#2a2c36" stroke="#2a2c36" stroke-width="0.6" stroke-linejoin="round"/><ellipse cx="16.7" cy="9.2" rx="1.3" ry="1.8" fill="#2a2c36"/></svg>
<div style="position:absolute;left:650.7px;top:1670.54px;font:normal 25px/25px 'Liberation Sans', sans-serif;color:#9b9b9b;white-space:nowrap;will-change:transform;-webkit-text-stroke:0.6px #9b9b9b;letter-spacing:-0.2px;">jj3</div>
<svg style="position:absolute;left:956px;top:1664px;overflow:visible" width="40" height="36" viewBox="0 0 40 36"><defs><mask id="es9561664" maskUnits="userSpaceOnUse" x="-5" y="-5" width="50" height="46"><rect x="-5" y="-5" width="50" height="46" fill="#fff"/><circle cx="19" cy="17" r="5" fill="none" stroke="#000" stroke-width="4"/><path d="M9.8 30.7 L32.6 7 L60 40 Z" fill="#fff"/><path d="M11.96 32.78 L34.76 9.08" stroke="#000" stroke-width="3.2"/></mask></defs><path d="M4.5 17.9 C9 9 14 5.8 19.95 5.8 C26 5.8 31 9 35.4 17.9 C31 26.8 26 30 19.95 30 C14 30 9 26.8 4.5 17.9 Z" fill="#9a9893" mask="url(#es9561664)"/><path d="M9.8 30.7 L32.6 7" stroke="#9a9893" stroke-width="3" stroke-linecap="round"/><rect x="18" y="16" width="1.8" height="1.8" fill="#2a2c36"/></svg>
<svg style="position:absolute;left:1020px;top:1666px;overflow:visible" width="24" height="32" viewBox="0 0 24 32"><path d="M6.1 11.8 V8 A5.95 5.95 0 0 1 18 8 V17" fill="none" stroke="#9a9893" stroke-width="4" stroke-linecap="round"/><rect x="0" y="16" width="24" height="16" rx="2.5" fill="#9a9893"/></svg>
<svg style="position:absolute;left:598px;top:1728px;overflow:visible" width="32" height="32" viewBox="0 0 32 32"><circle cx="15.97" cy="15.97" r="16" fill="#98999e"/><path d="M12.82 5.06 L11.27 7.13 L11.14 10.49 L8.16 11.78 L7.77 13.85 L4.40 15.20 L3.69 15.33 L3.84 13.94 L4.15 12.58 L4.61 11.26 L5.21 10.01 L5.96 8.83 L6.83 7.74 L7.82 6.76 L8.92 5.89 L10.10 5.16 L11.36 4.57 Z M4.10 16.60 L7.64 18.25 L7.90 24.90 L8.40 25.66 L7.61 24.99 L6.89 24.26 L6.22 23.47 L5.63 22.63 L5.11 21.74 L4.66 20.82 L4.30 19.85 L4.01 18.86 L3.81 17.85 L3.70 16.83 Z M20.06 5.60 L22.13 5.90 L24.30 7.50 L20.06 7.90 Z M20.32 9.20 L25.60 9.20 L28.10 15.40 L22.90 16.44 L22.26 21.60 L20.84 22.90 L19.16 21.60 L18.77 18.00 L17.20 17.20 L17.20 13.10 L20.32 11.78 Z" fill="#2a2c36" stroke="#2a2c36" stroke-width="0.6" stroke-linejoin="round"/><ellipse cx="16.7" cy="9.2" rx="1.3" ry="1.8" fill="#2a2c36"/></svg>
<div style="position:absolute;left:650.7px;top:1732.54px;font:normal 25px/25px 'Liberation Sans', sans-serif;color:#9b9b9b;white-space:nowrap;will-change:transform;-webkit-text-stroke:0.6px #9b9b9b;letter-spacing:-0.2px;">jj2</div>
<svg style="position:absolute;left:956px;top:1726px;overflow:visible" width="40" height="36" viewBox="0 0 40 36"><defs><mask id="es9561726" maskUnits="userSpaceOnUse" x="-5" y="-5" width="50" height="46"><rect x="-5" y="-5" width="50" height="46" fill="#fff"/><circle cx="19" cy="17" r="5" fill="none" stroke="#000" stroke-width="4"/><path d="M9.8 30.7 L32.6 7 L60 40 Z" fill="#fff"/><path d="M11.96 32.78 L34.76 9.08" stroke="#000" stroke-width="3.2"/></mask></defs><path d="M4.5 17.9 C9 9 14 5.8 19.95 5.8 C26 5.8 31 9 35.4 17.9 C31 26.8 26 30 19.95 30 C14 30 9 26.8 4.5 17.9 Z" fill="#9a9893" mask="url(#es9561726)"/><path d="M9.8 30.7 L32.6 7" stroke="#9a9893" stroke-width="3" stroke-linecap="round"/><rect x="18" y="16" width="1.8" height="1.8" fill="#2a2c36"/></svg>
<svg style="position:absolute;left:1020px;top:1728px;overflow:visible" width="24" height="32" viewBox="0 0 24 32"><path d="M6.1 11.8 V8 A5.95 5.95 0 0 1 18 8 V17" fill="none" stroke="#9a9893" stroke-width="4" stroke-linecap="round"/><rect x="0" y="16" width="24" height="16" rx="2.5" fill="#9a9893"/></svg>
<svg style="position:absolute;left:598px;top:1790px;overflow:visible" width="32" height="32" viewBox="0 0 32 32"><circle cx="15.97" cy="15.97" r="16" fill="#98999e"/><path d="M12.82 5.06 L11.27 7.13 L11.14 10.49 L8.16 11.78 L7.77 13.85 L4.40 15.20 L3.69 15.33 L3.84 13.94 L4.15 12.58 L4.61 11.26 L5.21 10.01 L5.96 8.83 L6.83 7.74 L7.82 6.76 L8.92 5.89 L10.10 5.16 L11.36 4.57 Z M4.10 16.60 L7.64 18.25 L7.90 24.90 L8.40 25.66 L7.61 24.99 L6.89 24.26 L6.22 23.47 L5.63 22.63 L5.11 21.74 L4.66 20.82 L4.30 19.85 L4.01 18.86 L3.81 17.85 L3.70 16.83 Z M20.06 5.60 L22.13 5.90 L24.30 7.50 L20.06 7.90 Z M20.32 9.20 L25.60 9.20 L28.10 15.40 L22.90 16.44 L22.26 21.60 L20.84 22.90 L19.16 21.60 L18.77 18.00 L17.20 17.20 L17.20 13.10 L20.32 11.78 Z" fill="#2a2c36" stroke="#2a2c36" stroke-width="0.6" stroke-linejoin="round"/><ellipse cx="16.7" cy="9.2" rx="1.3" ry="1.8" fill="#2a2c36"/></svg>
<div style="position:absolute;left:650.7px;top:1794.54px;font:normal 25px/25px 'Liberation Sans', sans-serif;color:#9b9b9b;white-space:nowrap;will-change:transform;-webkit-text-stroke:0.6px #9b9b9b;letter-spacing:-0.2px;"><span style="display:inline-block;transform:scaleX(0.58);transform-origin:0 0">JJ1</span></div>
<svg style="position:absolute;left:956px;top:1788px;overflow:visible" width="40" height="36" viewBox="0 0 40 36"><defs><mask id="es9561788" maskUnits="userSpaceOnUse" x="-5" y="-5" width="50" height="46"><rect x="-5" y="-5" width="50" height="46" fill="#fff"/><circle cx="19" cy="17" r="5" fill="none" stroke="#000" stroke-width="4"/><path d="M9.8 30.7 L32.6 7 L60 40 Z" fill="#fff"/><path d="M11.96 32.78 L34.76 9.08" stroke="#000" stroke-width="3.2"/></mask></defs><path d="M4.5 17.9 C9 9 14 5.8 19.95 5.8 C26 5.8 31 9 35.4 17.9 C31 26.8 26 30 19.95 30 C14 30 9 26.8 4.5 17.9 Z" fill="#9a9893" mask="url(#es9561788)"/><path d="M9.8 30.7 L32.6 7" stroke="#9a9893" stroke-width="3" stroke-linecap="round"/><rect x="18" y="16" width="1.8" height="1.8" fill="#2a2c36"/></svg>
<svg style="position:absolute;left:1020px;top:1790px;overflow:visible" width="24" height="32" viewBox="0 0 24 32"><path d="M6.1 11.8 V8 A5.95 5.95 0 0 1 18 8 V17" fill="none" stroke="#9a9893" stroke-width="4" stroke-linecap="round"/><rect x="0" y="16" width="24" height="16" rx="2.5" fill="#9a9893"/></svg>
<div style="position:absolute;left:1102px;top:1470px;width:20px;height:300px;background:#3c3e4a;border-radius:6px;"></div>
<div style="position:absolute;left:584px;top:1846px;width:62px;height:54px;background:#3c3e4a;border-radius:8px;"></div>
<div style="position:absolute;left:662px;top:1846px;width:62px;height:54px;background:#3c3e4a;border-radius:8px;"></div>
<div style="position:absolute;left:740px;top:1846px;width:62px;height:54px;background:#3c3e4a;border-radius:8px;"></div>
<div style="position:absolute;left:838px;top:1846px;width:62px;height:54px;background:#3c3e4a;border-radius:8px;"></div>
<div style="position:absolute;left:916px;top:1846px;width:62px;height:54px;background:#3c3e4a;border-radius:8px;"></div>
<svg style="position:absolute;left:599.5px;top:1857.5px;overflow:visible" width="29" height="29" viewBox="0 0 29 29"><rect x="12.3" y="0" width="4.4" height="29" fill="#fff"/><rect x="0" y="12.3" width="29" height="4.4" fill="#fff"/></svg>
<svg style="position:absolute;left:678px;top:1856px;overflow:visible" width="30" height="32" viewBox="0 0 30 32"><path d="M8 2.6 L10.4 0.1 H19.8 L22.2 2.6 Z" fill="#fff" stroke="#fff" stroke-width="0.6" stroke-linejoin="round"/><rect x="0" y="2.3" width="30" height="4.2" rx="1" fill="#fff"/><path d="M4.6 8 V26 Q4.6 30 8.6 30 H21.4 Q25.4 30 25.4 26 V8" fill="none" stroke="#fff" stroke-width="4"/><rect x="9.6" y="10" width="1.9" height="14" fill="#fff"/><rect x="14.05" y="10" width="1.9" height="14" fill="#fff"/><rect x="18.5" y="10" width="1.9" height="14" fill="#fff"/></svg>
<svg style="position:absolute;left:756px;top:1858px;overflow:visible" width="28" height="28" viewBox="0 0 28 28"><g transform="scale(1.0)"><circle cx="14" cy="14" r="11.4" fill="#fff"/><rect x="10.9" y="-0.1" width="6.2" height="8" rx="2.6" fill="#fff" transform="rotate(0 14 14)"/><rect x="10.9" y="-0.1" width="6.2" height="8" rx="2.6" fill="#fff" transform="rotate(45 14 14)"/><rect x="10.9" y="-0.1" width="6.2" height="8" rx="2.6" fill="#fff" transform="rotate(90 14 14)"/><rect x="10.9" y="-0.1" width="6.2" height="8" rx="2.6" fill="#fff" transform="rotate(135 14 14)"/><rect x="10.9" y="-0.1" width="6.2" height="8" rx="2.6" fill="#fff" transform="rotate(180 14 14)"/><rect x="10.9" y="-0.1" width="6.2" height="8" rx="2.6" fill="#fff" transform="rotate(225 14 14)"/><rect x="10.9" y="-0.1" width="6.2" height="8" rx="2.6" fill="#fff" transform="rotate(270 14 14)"/><rect x="10.9" y="-0.1" width="6.2" height="8" rx="2.6" fill="#fff" transform="rotate(315 14 14)"/><circle cx="14" cy="14" r="5.9" fill="#3c3e4a"/></g></svg>
<svg style="position:absolute;left:854.0px;top:1864.0px;overflow:visible" width="28" height="16" viewBox="0 0 28 16"><path d="M2 14 L14.0 2 L26 14" fill="none" stroke="#fff" stroke-width="3.6" stroke-linecap="round" stroke-linejoin="round"/></svg>
<svg style="position:absolute;left:932.0px;top:1864.0px;overflow:visible" width="28" height="16" viewBox="0 0 28 16"><path d="M2 2 L14.0 14 L26 2" fill="none" stroke="#fff" stroke-width="3.6" stroke-linecap="round" stroke-linejoin="round"/></svg>
<div style="position:absolute;left:818px;top:1848px;width:2px;height:50px;background:repeating-linear-gradient(#111 0 2px,transparent 2px 5.2px);"></div>
<div style="position:absolute;left:1154.5px;top:1474.84px;font:normal 25px/25px 'Liberation Sans', sans-serif;color:#fefefe;white-space:nowrap;will-change:transform;-webkit-text-stroke:0.6px #fefefe;letter-spacing:0.1px;">Desktop-Audio</div>
<div style="position:absolute;left:1305px;width:600px;top:1474.84px;font:normal 25px/25px 'Liberation Sans', sans-serif;color:#fefefe;text-align:right;white-space:nowrap;will-change:transform;-webkit-text-stroke:0.6px #fefefe;">0.0 dB</div>
<div style="position:absolute;left:1154px;top:1514px;width:754px;height:2px;background:#222;border-radius:0px;"></div>
<div style="position:absolute;left:1154px;top:1508px;width:6px;height:6px;background:#4f8a2a;border-radius:0px;"></div>
<div style="position:absolute;left:1160px;top:1508px;width:3.7000000000000455px;height:6px;background:#2a2a2a;border-radius:0px;"></div>
<div style="position:absolute;left:1163.7px;top:1508px;width:496.29999999999995px;height:6px;background:#5b5b5b;border-radius:0px;"></div>
<div style="position:absolute;left:1660px;top:1508px;width:136px;height:6px;background:#7a7a7a;border-radius:0px;"></div>
<div style="position:absolute;left:1796px;top:1508px;width:112px;height:6px;background:#3e3e3e;border-radius:0px;"></div>
<div style="position:absolute;left:1154px;top:1516px;width:6px;height:5.7999999999999545px;background:#4f8a2a;border-radius:0px;"></div>
<div style="position:absolute;left:1160px;top:1516px;width:3.7000000000000455px;height:5.7999999999999545px;background:#2a2a2a;border-radius:0px;"></div>
<div style="position:absolute;left:1163.7px;top:1516px;width:496.29999999999995px;height:5.7999999999999545px;background:#5b5b5b;border-radius:0px;"></div>
<div style="position:absolute;left:1660px;top:1516px;width:136px;height:5.7999999999999545px;background:#7a7a7a;border-radius:0px;"></div>
<div style="position:absolute;left:1796px;top:1516px;width:112px;height:5.7999999999999545px;background:#3e3e3e;border-radius:0px;"></div>
<div style="position:absolute;left:1163.0px;top:1521.8px;width:2.0px;height:5.0px;background:#fff;border-radius:0px;"></div>
<div style="position:absolute;left:1175.6px;top:1521.8px;width:1.5px;height:3.0px;background:#5a5a5a;border-radius:0px;"></div>
<div style="position:absolute;left:1188.0px;top:1521.8px;width:1.5px;height:3.0px;background:#5a5a5a;border-radius:0px;"></div>
<div style="position:absolute;left:1200.3px;top:1521.8px;width:1.5px;height:3.0px;background:#5a5a5a;border-radius:0px;"></div>
<div style="position:absolute;left:1212.7px;top:1521.8px;width:1.5px;height:3.0px;background:#5a5a5a;border-radius:0px;"></div>
<div style="position:absolute;left:1224.8px;top:1521.8px;width:2.0px;height:5.0px;background:#fff;border-radius:0px;"></div>
<div style="position:absolute;left:1237.4px;top:1521.8px;width:1.5px;height:3.0px;background:#5a5a5a;border-radius:0px;"></div>
<div style="position:absolute;left:1249.8px;top:1521.8px;width:1.5px;height:3.0px;background:#5a5a5a;border-radius:0px;"></div>
<div style="position:absolute;left:1262.2px;top:1521.8px;width:1.5px;height:3.0px;background:#5a5a5a;border-radius:0px;"></div>
<div style="position:absolute;left:1274.5px;top:1521.8px;width:1.5px;height:3.0px;background:#5a5a5a;border-radius:0px;"></div>
<div style="position:absolute;left:1286.7px;top:1521.8px;width:2.0px;height:5.0px;background:#fff;border-radius:0px;"></div>
<div style="position:absolute;left:1299.3px;top:1521.8px;width:1.5px;height:3.0px;background:#5a5a5a;border-radius:0px;"></div>
<div style="position:absolute;left:1311.6px;top:1521.8px;width:1.5px;height:3.0px;background:#5a5a5a;border-radius:0px;"></div>
<div style="position:absolute;left:1324.0px;top:1521.8px;width:1.5px;height:3.0px;background:#5a5a5a;border-radius:0px;"></div>
<div style="position:absolute;left:1336.4px;top:1521.8px;width:1.5px;height:3.0px;background:#5a5a5a;border-radius:0px;"></div>
<div style="position:absolute;left:1348.5px;top:1521.8px;width:2.0px;height:5.0px;background:#fff;border-radius:0px;"></div>
<div style="position:absolute;left:1361.1px;top:1521.8px;width:1.5px;height:3.0px;background:#5a5a5a;border-radius:0px;"></div>
<div style="position:absolute;left:1373.5px;top:1521.8px;width:1.5px;height:3.0px;background:#5a5a5a;border-radius:0px;"></div>
<div style="position:absolute;left:1385.8px;top:1521.8px;width:1.5px;height:3.0px;background:#5a5a5a;border-radius:0px;"></div>
<div style="position:absolute;left:1398.2px;top:1521.8px;width:1.5px;height:3.0px;background:#5a5a5a;border-radius:0px;"></div>
<div style="position:absolute;left:1410.3px;top:1521.8px;width:2.0px;height:5.0px;background:#fff;border-radius:0px;"></div>
<div style="position:absolute;left:1422.9px;top:1521.8px;width:1.5px;height:3.0px;background:#5a5a5a;border-radius:0px;"></div>
<div style="position:absolute;left:1435.3px;top:1521.8px;width:1.5px;height:3.0px;background:#5a5a5a;border-radius:0px;"></div>
<div style="position:absolute;left:1447.6px;top:1521.8px;width:1.5px;height:3.0px;background:#5a5a5a;border-radius:0px;"></div>
<div style="position:absolute;left:1460.0px;top:1521.8px;width:1.5px;height:3.0px;background:#5a5a5a;border-radius:0px;"></div>
<div style="position:absolute;left:1472.1px;top:1521.8px;width:2.0px;height:5.0px;background:#fff;border-radius:0px;"></div>
<div style="position:absolute;left:1484.7px;top:1521.8px;width:1.5px;height:3.0px;background:#5a5a5a;border-radius:0px;"></div>
<div style="position:absolute;left:1497.1px;top:1521.8px;width:1.5px;height:3.0px;background:#5a5a5a;border-radius:0px;"></div>
<div style="position:absolute;left:1509.5px;top:1521.8px;width:1.5px;height:3.0px;background:#5a5a5a;border-radius:0px;"></div>
<div style="position:absolute;left:1521.8px;top:1521.8px;width:1.5px;height:3.0px;background:#5a5a5a;border-radius:0px;"></div>
<div style="position:absolute;left:1534.0px;top:1521.8px;width:2.0px;height:5.0px;background:#fff;border-radius:0px;"></div>
<div style="position:absolute;left:1546.6px;top:1521.8px;width:1.5px;height:3.0px;background:#5a5a5a;border-radius:0px;"></div>
<div style="position:absolute;left:1558.9px;top:1521.8px;width:1.5px;height:3.0px;background:#5a5a5a;border-radius:0px;"></div>
<div style="position:absolute;left:1571.3px;top:1521.8px;width:1.5px;height:3.0px;background:#5a5a5a;border-radius:0px;"></div>
<div style="position:absolute;left:1583.7px;top:1521.8px;width:1.5px;height:3.0px;background:#5a5a5a;border-radius:0px;"></div>
<div style="position:absolute;left:1595.8px;top:1521.8px;width:2.0px;height:5.0px;background:#fff;border-radius:0px;"></div>
<div style="position:absolute;left:1608.4px;top:1521.8px;width:1.5px;height:3.0px;background:#5a5a5a;border-radius:0px;"></div>
<div style="position:absolute;left:1620.8px;top:1521.8px;width:1.5px;height:3.0px;background:#5a5a5a;border-radius:0px;"></div>
<div style="position:absolute;left:1633.1px;top:1521.8px;width:1.5px;height:3.0px;background:#5a5a5a;border-radius:0px;"></div>
<div style="position:absolute;left:1645.5px;top:1521.8px;width:1.5px;height:3.0px;background:#5a5a5a;border-radius:0px;"></div>
<div style="position:absolute;left:1657.6px;top:1521.8px;width:2.0px;height:5.0px;background:#fff;border-radius:0px;"></div>
<div style="position:absolute;left:1670.2px;top:1521.8px;width:1.5px;height:3.0px;background:#5a5a5a;border-radius:0px;"></div>
<div style="position:absolute;left:1682.6px;top:1521.8px;width:1.5px;height:3.0px;background:#5a5a5a;border-radius:0px;"></div>
<div style="position:absolute;left:1694.9px;top:1521.8px;width:1.5px;height:3.0px;background:#5a5a5a;border-radius:0px;"></div>
<div style="position:absolute;left:1707.3px;top:1521.8px;width:1.5px;height:3.0px;background:#5a5a5a;border-radius:0px;"></div>
<div style="position:absolute;left:1719.4px;top:1521.8px;width:2.0px;height:5.0px;background:#fff;border-radius:0px;"></div>
<div style="position:absolute;left:1732.0px;top:1521.8px;width:1.5px;height:3.0px;background:#5a5a5a;border-radius:0px;"></div>
<div style="position:absolute;left:1744.4px;top:1521.8px;width:1.5px;height:3.0px;background:#5a5a5a;border-radius:0px;"></div>
<div style="position:absolute;left:1756.8px;top:1521.8px;width:1.5px;height:3.0px;background:#5a5a5a;border-radius:0px;"></div>
<div style="position:absolute;left:1769.1px;top:1521.8px;width:1.5px;height:3.0px;background:#5a5a5a;border-radius:0px;"></div>
<div style="position:absolute;left:1781.2px;top:1521.8px;width:2.0px;height:5.0px;background:#fff;border-radius:0px;"></div>
<div style="position:absolute;left:1793.9px;top:1521.8px;width:1.5px;height:3.0px;background:#5a5a5a;border-radius:0px;"></div>
<div style="position:absolute;left:1806.2px;top:1521.8px;width:1.5px;height:3.0px;background:#5a5a5a;border-radius:0px;"></div>
<div style="position:absolute;left:1818.6px;top:1521.8px;width:1.5px;height:3.0px;background:#5a5a5a;border-radius:0px;"></div>
<div style="position:absolute;left:1831.0px;top:1521.8px;width:1.5px;height:3.0px;background:#5a5a5a;border-radius:0px;"></div>
<div style="position:absolute;left:1843.1px;top:1521.8px;width:2.0px;height:5.0px;background:#fff;border-radius:0px;"></div>
<div style="position:absolute;left:1855.7px;top:1521.8px;width:1.5px;height:3.0px;background:#5a5a5a;border-radius:0px;"></div>
<div style="position:absolute;left:1868.1px;top:1521.8px;width:1.5px;height:3.0px;background:#5a5a5a;border-radius:0px;"></div>
<div style="position:absolute;left:1880.4px;top:1521.8px;width:1.5px;height:3.0px;background:#5a5a5a;border-radius:0px;"></div>
<div style="position:absolute;left:1892.8px;top:1521.8px;width:1.5px;height:3.0px;background:#5a5a5a;border-radius:0px;"></div>
<div style="position:absolute;left:1904.9px;top:1521.8px;width:2.0px;height:5.0px;background:#fff;border-radius:0px;"></div>
<div style="position:absolute;left:765.5px;width:800px;top:1528.46px;font:normal 16px/16px 'Liberation Sans', sans-serif;color:#fefefe;text-align:center;white-space:nowrap;will-change:transform;letter-spacing:-0.3px;">-60</div>
<div style="position:absolute;left:827.325px;width:800px;top:1528.46px;font:normal 16px/16px 'Liberation Sans', sans-serif;color:#fefefe;text-align:center;white-space:nowrap;will-change:transform;letter-spacing:-0.3px;">-55</div>
<div style="position:absolute;left:889.1500000000001px;width:800px;top:1528.46px;font:normal 16px/16px 'Liberation Sans', sans-serif;color:#fefefe;text-align:center;white-space:nowrap;will-change:transform;letter-spacing:-0.3px;">-50</div>
<div style="position:absolute;left:950.9750000000001px;width:800px;top:1528.46px;font:normal 16px/16px 'Liberation Sans', sans-serif;color:#fefefe;text-align:center;white-space:nowrap;will-change:transform;letter-spacing:-0.3px;">-45</div>
<div style="position:absolute;left:1012.8000000000002px;width:800px;top:1528.46px;font:normal 16px/16px 'Liberation Sans', sans-serif;color:#fefefe;text-align:center;white-space:nowrap;will-change:transform;letter-spacing:-0.3px;">-40</div>
<div style="position:absolute;left:1074.625px;width:800px;top:1528.46px;font:normal 16px/16px 'Liberation Sans', sans-serif;color:#fefefe;text-align:center;white-space:nowrap;will-change:transform;letter-spacing:-0.3px;">-35</div>
<div style="position:absolute;left:1136.45px;width:800px;top:1528.46px;font:normal 16px/16px 'Liberation Sans', sans-serif;color:#fefefe;text-align:center;white-space:nowrap;will-change:transform;letter-spacing:-0.3px;">-30</div>
<div style="position:absolute;left:1198.275px;width:800px;top:1528.46px;font:normal 16px/16px 'Liberation Sans', sans-serif;color:#fefefe;text-align:center;white-space:nowrap;will-change:transform;letter-spacing:-0.3px;">-25</div>
<div style="position:absolute;left:1260.1000000000001px;width:800px;top:1528.46px;font:normal 16px/16px 'Liberation Sans', sans-serif;color:#fefefe;text-align:center;white-space:nowrap;will-change:transform;letter-spacing:-0.3px;">-20</div>
<div style="position:absolute;left:1321.9250000000002px;width:800px;top:1528.46px;font:normal 16px/16px 'Liberation Sans', sans-serif;color:#fefefe;text-align:center;white-space:nowrap;will-change:transform;letter-spacing:-0.3px;">-15</div>
<div style="position:absolute;left:1383.75px;width:800px;top:1528.46px;font:normal 16px/16px 'Liberation Sans', sans-serif;color:#fefefe;text-align:center;white-space:nowrap;will-change:transform;letter-spacing:-0.3px;">-10</div>
<div style="position:absolute;left:1445.575px;width:800px;top:1528.46px;font:normal 16px/16px 'Liberation Sans', sans-serif;color:#fefefe;text-align:center;white-space:nowrap;will-change:transform;letter-spacing:-0.3px;">-5</div>
<div style="position:absolute;left:1307.5px;width:600px;top:1528.46px;font:normal 16px/16px 'Liberation Sans', sans-serif;color:#fefefe;text-align:right;white-space:nowrap;will-change:transform;">0</div>
<div style="position:absolute;left:1154px;top:1568px;width:608px;height:7.5px;background:#4a80d6;border-radius:4px;"></div>
<div style="position:absolute;left:1754.5px;top:1563px;width:38.0px;height:18px;background:#fff;border-radius:5px;border:1.5px solid #15161c;"></div>
<svg style="position:absolute;left:1800px;top:1564px;overflow:visible" width="32" height="29" viewBox="0 0 32 29"><path d="M0 10.5 Q0 8 2.5 8 L6.5 8 L14.4 0 L14.4 28.2 L6.5 20.4 L2.5 20.4 Q0 20.4 0 18 Z" fill="#b22f31"/><path d="M19.8 9.8 L29 18.6 M29 9.8 L19.8 18.6" stroke="#b22f31" stroke-width="3.4" stroke-linecap="round"/></svg>
<div style="position:absolute;left:1840px;top:1554px;width:64px;height:52px;background:#3c3e4a;border-radius:8px;"></div>
<svg style="position:absolute;left:1866px;top:1560px;overflow:visible" width="12" height="40" viewBox="0 0 12 40"><circle cx="6" cy="8" r="4.3" fill="#fff"/><circle cx="6" cy="20" r="4.3" fill="#fff"/><circle cx="6" cy="32" r="4.3" fill="#fff"/></svg>
<div style="position:absolute;left:1154.5px;top:1622.74px;font:normal 25px/25px 'Liberation Sans', sans-serif;color:#fefefe;white-space:nowrap;will-change:transform;-webkit-text-stroke:0.6px #fefefe;letter-spacing:0.25px;">Mikrofon-/AUX-Audio</div>
<div style="position:absolute;left:1305px;width:600px;top:1622.74px;font:normal 25px/25px 'Liberation Sans', sans-serif;color:#fefefe;text-align:right;white-space:nowrap;will-change:transform;-webkit-text-stroke:0.6px #fefefe;">-inf dB</div>
<div style="position:absolute;left:1154px;top:1656px;width:6px;height:6px;background:#4f8a2a;border-radius:0px;"></div>
<div style="position:absolute;left:1160px;top:1656px;width:3.7000000000000455px;height:6px;background:#2a2a2a;border-radius:0px;"></div>
<div style="position:absolute;left:1163.7px;top:1656px;width:496.29999999999995px;height:6px;background:#5b5b5b;border-radius:0px;"></div>
<div style="position:absolute;left:1660px;top:1656px;width:136px;height:6px;background:#7a7a7a;border-radius:0px;"></div>
<div style="position:absolute;left:1796px;top:1656px;width:112px;height:6px;background:#3e3e3e;border-radius:0px;"></div>
<div style="position:absolute;left:1163.0px;top:1662px;width:2.0px;height:5px;background:#fff;border-radius:0px;"></div>
<div style="position:absolute;left:1175.6px;top:1662px;width:1.5px;height:3px;background:#5a5a5a;border-radius:0px;"></div>
<div style="position:absolute;left:1188.0px;top:1662px;width:1.5px;height:3px;background:#5a5a5a;border-radius:0px;"></div>
<div style="position:absolute;left:1200.3px;top:1662px;width:1.5px;height:3px;background:#5a5a5a;border-radius:0px;"></div>
<div style="position:absolute;left:1212.7px;top:1662px;width:1.5px;height:3px;background:#5a5a5a;border-radius:0px;"></div>
<div style="position:absolute;left:1224.8px;top:1662px;width:2.0px;height:5px;background:#fff;border-radius:0px;"></div>
<div style="position:absolute;left:1237.4px;top:1662px;width:1.5px;height:3px;background:#5a5a5a;border-radius:0px;"></div>
<div style="position:absolute;left:1249.8px;top:1662px;width:1.5px;height:3px;background:#5a5a5a;border-radius:0px;"></div>
<div style="position:absolute;left:1262.2px;top:1662px;width:1.5px;height:3px;background:#5a5a5a;border-radius:0px;"></div>
<div style="position:absolute;left:1274.5px;top:1662px;width:1.5px;height:3px;background:#5a5a5a;border-radius:0px;"></div>
<div style="position:absolute;left:1286.7px;top:1662px;width:2.0px;height:5px;background:#fff;border-radius:0px;"></div>
<div style="position:absolute;left:1299.3px;top:1662px;width:1.5px;height:3px;background:#5a5a5a;border-radius:0px;"></div>
<div style="position:absolute;left:1311.6px;top:1662px;width:1.5px;height:3px;background:#5a5a5a;border-radius:0px;"></div>
<div style="position:absolute;left:1324.0px;top:1662px;width:1.5px;height:3px;background:#5a5a5a;border-radius:0px;"></div>
<div style="position:absolute;left:1336.4px;top:1662px;width:1.5px;height:3px;background:#5a5a5a;border-radius:0px;"></div>
<div style="position:absolute;left:1348.5px;top:1662px;width:2.0px;height:5px;background:#fff;border-radius:0px;"></div>
<div style="position:absolute;left:1361.1px;top:1662px;width:1.5px;height:3px;background:#5a5a5a;border-radius:0px;"></div>
<div style="position:absolute;left:1373.5px;top:1662px;width:1.5px;height:3px;background:#5a5a5a;border-radius:0px;"></div>
<div style="position:absolute;left:1385.8px;top:1662px;width:1.5px;height:3px;background:#5a5a5a;border-radius:0px;"></div>
<div style="position:absolute;left:1398.2px;top:1662px;width:1.5px;height:3px;background:#5a5a5a;border-radius:0px;"></div>
<div style="position:absolute;left:1410.3px;top:1662px;width:2.0px;height:5px;background:#fff;border-radius:0px;"></div>
<div style="position:absolute;left:1422.9px;top:1662px;width:1.5px;height:3px;background:#5a5a5a;border-radius:0px;"></div>
<div style="position:absolute;left:1435.3px;top:1662px;width:1.5px;height:3px;background:#5a5a5a;border-radius:0px;"></div>
<div style="position:absolute;left:1447.6px;top:1662px;width:1.5px;height:3px;background:#5a5a5a;border-radius:0px;"></div>
<div style="position:absolute;left:1460.0px;top:1662px;width:1.5px;height:3px;background:#5a5a5a;border-radius:0px;"></div>
<div style="position:absolute;left:1472.1px;top:1662px;width:2.0px;height:5px;background:#fff;border-radius:0px;"></div>
<div style="position:absolute;left:1484.7px;top:1662px;width:1.5px;height:3px;background:#5a5a5a;border-radius:0px;"></div>
<div style="position:absolute;left:1497.1px;top:1662px;width:1.5px;height:3px;background:#5a5a5a;border-radius:0px;"></div>
<div style="position:absolute;left:1509.5px;top:1662px;width:1.5px;height:3px;background:#5a5a5a;border-radius:0px;"></div>
<div style="position:absolute;left:1521.8px;top:1662px;width:1.5px;height:3px;background:#5a5a5a;border-radius:0px;"></div>
<div style="position:absolute;left:1534.0px;top:1662px;width:2.0px;height:5px;background:#fff;border-radius:0px;"></div>
<div style="position:absolute;left:1546.6px;top:1662px;width:1.5px;height:3px;background:#5a5a5a;border-radius:0px;"></div>
<div style="position:absolute;left:1558.9px;top:1662px;width:1.5px;height:3px;background:#5a5a5a;border-radius:0px;"></div>
<div style="position:absolute;left:1571.3px;top:1662px;width:1.5px;height:3px;background:#5a5a5a;border-radius:0px;"></div>
<div style="position:absolute;left:1583.7px;top:1662px;width:1.5px;height:3px;background:#5a5a5a;border-radius:0px;"></div>
<div style="position:absolute;left:1595.8px;top:1662px;width:2.0px;height:5px;background:#fff;border-radius:0px;"></div>
<div style="position:absolute;left:1608.4px;top:1662px;width:1.5px;height:3px;background:#5a5a5a;border-radius:0px;"></div>
<div style="position:absolute;left:1620.8px;top:1662px;width:1.5px;height:3px;background:#5a5a5a;border-radius:0px;"></div>
<div style="position:absolute;left:1633.1px;top:1662px;width:1.5px;height:3px;background:#5a5a5a;border-radius:0px;"></div>
<div style="position:absolute;left:1645.5px;top:1662px;width:1.5px;height:3px;background:#5a5a5a;border-radius:0px;"></div>
<div style="position:absolute;left:1657.6px;top:1662px;width:2.0px;height:5px;background:#fff;border-radius:0px;"></div>
<div style="position:absolute;left:1670.2px;top:1662px;width:1.5px;height:3px;background:#5a5a5a;border-radius:0px;"></div>
<div style="position:absolute;left:1682.6px;top:1662px;width:1.5px;height:3px;background:#5a5a5a;border-radius:0px;"></div>
<div style="position:absolute;left:1694.9px;top:1662px;width:1.5px;height:3px;background:#5a5a5a;border-radius:0px;"></div>
<div style="position:absolute;left:1707.3px;top:1662px;width:1.5px;height:3px;background:#5a5a5a;border-radius:0px;"></div>
<div style="position:absolute;left:1719.4px;top:1662px;width:2.0px;height:5px;background:#fff;border-radius:0px;"></div>
<div style="position:absolute;left:1732.0px;top:1662px;width:1.5px;height:3px;background:#5a5a5a;border-radius:0px;"></div>
<div style="position:absolute;left:1744.4px;top:1662px;width:1.5px;height:3px;background:#5a5a5a;border-radius:0px;"></div>
<div style="position:absolute;left:1756.8px;top:1662px;width:1.5px;height:3px;background:#5a5a5a;border-radius:0px;"></div>
<div style="position:absolute;left:1769.1px;top:1662px;width:1.5px;height:3px;background:#5a5a5a;border-radius:0px;"></div>
<div style="position:absolute;left:1781.2px;top:1662px;width:2.0px;height:5px;background:#fff;border-radius:0px;"></div>
<div style="position:absolute;left:1793.9px;top:1662px;width:1.5px;height:3px;background:#5a5a5a;border-radius:0px;"></div>
<div style="position:absolute;left:1806.2px;top:1662px;width:1.5px;height:3px;background:#5a5a5a;border-radius:0px;"></div>
<div style="position:absolute;left:1818.6px;top:1662px;width:1.5px;height:3px;background:#5a5a5a;border-radius:0px;"></div>
<div style="position:absolute;left:1831.0px;top:1662px;width:1.5px;height:3px;background:#5a5a5a;border-radius:0px;"></div>
<div style="position:absolute;left:1843.1px;top:1662px;width:2.0px;height:5px;background:#fff;border-radius:0px;"></div>
<div style="position:absolute;left:1855.7px;top:1662px;width:1.5px;height:3px;background:#5a5a5a;border-radius:0px;"></div>
<div style="position:absolute;left:1868.1px;top:1662px;width:1.5px;height:3px;background:#5a5a5a;border-radius:0px;"></div>
<div style="position:absolute;left:1880.4px;top:1662px;width:1.5px;height:3px;background:#5a5a5a;border-radius:0px;"></div>
<div style="position:absolute;left:1892.8px;top:1662px;width:1.5px;height:3px;background:#5a5a5a;border-radius:0px;"></div>
<div style="position:absolute;left:1904.9px;top:1662px;width:2.0px;height:5px;background:#fff;border-radius:0px;"></div>
<div style="position:absolute;left:765.5px;width:800px;top:1668.16px;font:normal 16px/16px 'Liberation Sans', sans-serif;color:#fefefe;text-align:center;white-space:nowrap;will-change:transform;letter-spacing:-0.3px;">-60</div>
<div style="position:absolute;left:827.325px;width:800px;top:1668.16px;font:normal 16px/16px 'Liberation Sans', sans-serif;color:#fefefe;text-align:center;white-space:nowrap;will-change:transform;letter-spacing:-0.3px;">-55</div>
<div style="position:absolute;left:889.1500000000001px;width:800px;top:1668.16px;font:normal 16px/16px 'Liberation Sans', sans-serif;color:#fefefe;text-align:center;white-space:nowrap;will-change:transform;letter-spacing:-0.3px;">-50</div>
<div style="position:absolute;left:950.9750000000001px;width:800px;top:1668.16px;font:normal 16px/16px 'Liberation Sans', sans-serif;color:#fefefe;text-align:center;white-space:nowrap;will-change:transform;letter-spacing:-0.3px;">-45</div>
<div style="position:absolute;left:1012.8000000000002px;width:800px;top:1668.16px;font:normal 16px/16px 'Liberation Sans', sans-serif;color:#fefefe;text-align:center;white-space:nowrap;will-change:transform;letter-spacing:-0.3px;">-40</div>
<div style="position:absolute;left:1074.625px;width:800px;top:1668.16px;font:normal 16px/16px 'Liberation Sans', sans-serif;color:#fefefe;text-align:center;white-space:nowrap;will-change:transform;letter-spacing:-0.3px;">-35</div>
<div style="position:absolute;left:1136.45px;width:800px;top:1668.16px;font:normal 16px/16px 'Liberation Sans', sans-serif;color:#fefefe;text-align:center;white-space:nowrap;will-change:transform;letter-spacing:-0.3px;">-30</div>
<div style="position:absolute;left:1198.275px;width:800px;top:1668.16px;font:normal 16px/16px 'Liberation Sans', sans-serif;color:#fefefe;text-align:center;white-space:nowrap;will-change:transform;letter-spacing:-0.3px;">-25</div>
<div style="position:absolute;left:1260.1000000000001px;width:800px;top:1668.16px;font:normal 16px/16px 'Liberation Sans', sans-serif;color:#fefefe;text-align:center;white-space:nowrap;will-change:transform;letter-spacing:-0.3px;">-20</div>
<div style="position:absolute;left:1321.9250000000002px;width:800px;top:1668.16px;font:normal 16px/16px 'Liberation Sans', sans-serif;color:#fefefe;text-align:center;white-space:nowrap;will-change:transform;letter-spacing:-0.3px;">-15</div>
<div style="position:absolute;left:1383.75px;width:800px;top:1668.16px;font:normal 16px/16px 'Liberation Sans', sans-serif;color:#fefefe;text-align:center;white-space:nowrap;will-change:transform;letter-spacing:-0.3px;">-10</div>
<div style="position:absolute;left:1445.575px;width:800px;top:1668.16px;font:normal 16px/16px 'Liberation Sans', sans-serif;color:#fefefe;text-align:center;white-space:nowrap;will-change:transform;letter-spacing:-0.3px;">-5</div>
<div style="position:absolute;left:1307.5px;width:600px;top:1668.16px;font:normal 16px/16px 'Liberation Sans', sans-serif;color:#fefefe;text-align:right;white-space:nowrap;will-change:transform;">0</div>
<div style="position:absolute;left:1170px;top:1708px;width:624px;height:8px;background:#3a3d48;border-radius:4px;"></div>
<div style="position:absolute;left:1155.5px;top:1703px;width:37.0px;height:18px;background:#fff;border-radius:5px;border:1.5px solid #15161c;"></div>
<svg style="position:absolute;left:1800px;top:1704px;overflow:visible" width="32" height="29" viewBox="0 0 32 29"><path d="M0 10.5 Q0 8 2.5 8 L6.5 8 L14.4 0 L14.4 28.2 L6.5 20.4 L2.5 20.4 Q0 20.4 0 18 Z" fill="#b22f31"/><path d="M19.8 9.8 L29 18.6 M29 9.8 L19.8 18.6" stroke="#b22f31" stroke-width="3.4" stroke-linecap="round"/></svg>
<div style="position:absolute;left:1840px;top:1694px;width:64px;height:52px;background:#3c3e4a;border-radius:8px;"></div>
<svg style="position:absolute;left:1866px;top:1700px;overflow:visible" width="12" height="40" viewBox="0 0 12 40"><circle cx="6" cy="8" r="4.3" fill="#fff"/><circle cx="6" cy="20" r="4.3" fill="#fff"/><circle cx="6" cy="32" r="4.3" fill="#fff"/></svg>
<div style="position:absolute;left:1156px;top:1846px;width:62px;height:54px;background:#3c3e4a;border-radius:8px;"></div>
<div style="position:absolute;left:1254px;top:1846px;width:62px;height:54px;background:#3c3e4a;border-radius:8px;"></div>
<div style="position:absolute;left:1234px;top:1848px;width:2px;height:50px;background:repeating-linear-gradient(#111 0 2px,transparent 2px 5.2px);"></div>
<svg style="position:absolute;left:1279px;top:1853px;overflow:visible" width="12" height="40" viewBox="0 0 12 40"><circle cx="6" cy="8" r="4.3" fill="#fff"/><circle cx="6" cy="20" r="4.3" fill="#fff"/><circle cx="6" cy="32" r="4.3" fill="#fff"/></svg>
<svg style="position:absolute;left:1168.8999999999999px;top:1863.1px;overflow:visible" width="23.8" height="23.8" viewBox="0 0 23.8 23.8"><g transform="translate(11.9 11.9)"><circle r="8.4" fill="#fff"/><rect x="-2.3" y="-10.9" width="4.6" height="4.5" rx="1.9319999999999997" fill="#fff" transform="rotate(0)"/><rect x="-2.3" y="-10.9" width="4.6" height="4.5" rx="1.9319999999999997" fill="#fff" transform="rotate(45)"/><rect x="-2.3" y="-10.9" width="4.6" height="4.5" rx="1.9319999999999997" fill="#fff" transform="rotate(90)"/><rect x="-2.3" y="-10.9" width="4.6" height="4.5" rx="1.9319999999999997" fill="#fff" transform="rotate(135)"/><rect x="-2.3" y="-10.9" width="4.6" height="4.5" rx="1.9319999999999997" fill="#fff" transform="rotate(180)"/><rect x="-2.3" y="-10.9" width="4.6" height="4.5" rx="1.9319999999999997" fill="#fff" transform="rotate(225)"/><rect x="-2.3" y="-10.9" width="4.6" height="4.5" rx="1.9319999999999997" fill="#fff" transform="rotate(270)"/><rect x="-2.3" y="-10.9" width="4.6" height="4.5" rx="1.9319999999999997" fill="#fff" transform="rotate(315)"/><circle r="3.8" fill="#3c3e4a"/></g></svg>
<svg style="position:absolute;left:1187.0px;top:1856.9px;overflow:visible" width="16.2" height="16.2" viewBox="0 0 16.2 16.2"><g transform="translate(8.1 8.1)"><circle r="5.3" fill="#fff"/><rect x="-1.45" y="-7.1" width="2.9" height="3.8" rx="1.218" fill="#fff" transform="rotate(0)"/><rect x="-1.45" y="-7.1" width="2.9" height="3.8" rx="1.218" fill="#fff" transform="rotate(45)"/><rect x="-1.45" y="-7.1" width="2.9" height="3.8" rx="1.218" fill="#fff" transform="rotate(90)"/><rect x="-1.45" y="-7.1" width="2.9" height="3.8" rx="1.218" fill="#fff" transform="rotate(135)"/><rect x="-1.45" y="-7.1" width="2.9" height="3.8" rx="1.218" fill="#fff" transform="rotate(180)"/><rect x="-1.45" y="-7.1" width="2.9" height="3.8" rx="1.218" fill="#fff" transform="rotate(225)"/><rect x="-1.45" y="-7.1" width="2.9" height="3.8" rx="1.218" fill="#fff" transform="rotate(270)"/><rect x="-1.45" y="-7.1" width="2.9" height="3.8" rx="1.218" fill="#fff" transform="rotate(315)"/><circle r="1.9" fill="#3c3e4a"/></g></svg>
<div style="position:absolute;left:1942px;top:1470px;width:504px;height:54px;background:#3c3e4a;border-radius:8px;"></div>
<div style="position:absolute;left:2404px;top:1470px;width:2px;height:54px;background:#1f2029;border-radius:0px;"></div>
<svg style="position:absolute;left:2419.0px;top:1485.0px;overflow:visible" width="14" height="8" viewBox="0 0 14 8"><path d="M2 6 L7.0 2 L12 6" fill="none" stroke="#fff" stroke-width="2" stroke-linecap="round" stroke-linejoin="round"/></svg>
<svg style="position:absolute;left:2419.0px;top:1501.0px;overflow:visible" width="14" height="8" viewBox="0 0 14 8"><path d="M2 2 L7.0 6 L12 2" fill="none" stroke="#fff" stroke-width="2" stroke-linecap="round" stroke-linejoin="round"/></svg>
<div style="position:absolute;left:1962.7px;top:1483.74px;font:normal 25px/25px 'Liberation Sans', sans-serif;color:#fefefe;white-space:nowrap;will-change:transform;-webkit-text-stroke:0.6px #fefefe;letter-spacing:-0.6px;">Fade</div>
<div style="position:absolute;left:1938.7px;top:1553.34px;font:normal 25px/25px 'Liberation Sans', sans-serif;color:#fefefe;white-space:nowrap;will-change:transform;-webkit-text-stroke:0.6px #fefefe;letter-spacing:0.3px;">Duration</div>
<div style="position:absolute;left:2046px;top:1536px;width:398px;height:60px;background:#3c3e4a;border-radius:8px;"></div>
<div style="position:absolute;left:2064.5px;top:1553.34px;font:normal 25px/25px 'Liberation Sans', sans-serif;color:#fefefe;white-space:nowrap;will-change:transform;-webkit-text-stroke:0.6px #fefefe;letter-spacing:-0.3px;">300 ms</div>
<svg style="position:absolute;left:2412.0px;top:1547.5px;overflow:visible" width="18" height="11" viewBox="0 0 18 11"><path d="M2 9 L9.0 2 L16 9" fill="none" stroke="#fff" stroke-width="2.4" stroke-linecap="round" stroke-linejoin="round"/></svg>
<svg style="position:absolute;left:2412.0px;top:1573.5px;overflow:visible" width="18" height="11" viewBox="0 0 18 11"><path d="M2 2 L9.0 9 L16 2" fill="none" stroke="#fff" stroke-width="2.4" stroke-linecap="round" stroke-linejoin="round"/></svg>
<div style="position:absolute;left:2222px;top:1606px;width:64px;height:52px;background:#3c3e4a;border-radius:8px;"></div>
<div style="position:absolute;left:2302px;top:1606px;width:64px;height:52px;background:#1c1e26;border-radius:8px;"></div>
<div style="position:absolute;left:2382px;top:1606px;width:64px;height:52px;background:#1c1e26;border-radius:8px;"></div>
<svg style="position:absolute;left:2239.5px;top:1617.5px;overflow:visible" width="29" height="29" viewBox="0 0 29 29"><rect x="12.3" y="0" width="4.4" height="29" fill="#fff"/><rect x="0" y="12.3" width="29" height="4.4" fill="#fff"/></svg>
<svg style="position:absolute;left:2320px;top:1616px;overflow:visible" width="30" height="32" viewBox="0 0 30 32"><path d="M8 2.6 L10.4 0.1 H19.8 L22.2 2.6 Z" fill="#8a8a8a" stroke="#8a8a8a" stroke-width="0.6" stroke-linejoin="round"/><rect x="0" y="2.3" width="30" height="4.2" rx="1" fill="#8a8a8a"/><path d="M4.6 8 V26 Q4.6 30 8.6 30 H21.4 Q25.4 30 25.4 26 V8" fill="none" stroke="#8a8a8a" stroke-width="4"/><rect x="9.6" y="10" width="1.9" height="14" fill="#8a8a8a"/><rect x="14.05" y="10" width="1.9" height="14" fill="#8a8a8a"/><rect x="18.5" y="10" width="1.9" height="14" fill="#8a8a8a"/></svg>
<svg style="position:absolute;left:2408px;top:1612px;overflow:visible" width="12" height="40" viewBox="0 0 12 40"><circle cx="6" cy="8" r="4.2" fill="#8a8a8a"/><circle cx="6" cy="20" r="4.2" fill="#8a8a8a"/><circle cx="6" cy="32" r="4.2" fill="#8a8a8a"/></svg>
<div style="position:absolute;left:2478px;top:1468px;width:536px;height:76px;background:#3c3e4a;border-radius:8px;"></div>
<div style="position:absolute;left:2346px;width:800px;top:1494.14px;font:normal 25px/25px 'Liberation Sans', sans-serif;color:#fefefe;text-align:center;white-space:nowrap;will-change:transform;-webkit-text-stroke:0.6px #fefefe;">Start Streaming</div>
<div style="position:absolute;left:2478px;top:1552px;width:536px;height:76px;background:#3c3e4a;border-radius:8px;"></div>
<div style="position:absolute;left:2346px;width:800px;top:1578.14px;font:normal 25px/25px 'Liberation Sans', sans-serif;color:#fefefe;text-align:center;white-space:nowrap;will-change:transform;-webkit-text-stroke:0.6px #fefefe;">Start Recording</div>
<div style="position:absolute;left:2478px;top:1704px;width:536px;height:60px;background:#3c3e4a;border-radius:8px;"></div>
<div style="position:absolute;left:2346px;width:800px;top:1722.14px;font:normal 25px/25px 'Liberation Sans', sans-serif;color:#fefefe;text-align:center;white-space:nowrap;will-change:transform;-webkit-text-stroke:0.6px #fefefe;">Studio Mode</div>
<div style="position:absolute;left:2478px;top:1772px;width:536px;height:60px;background:#3c3e4a;border-radius:8px;"></div>
<div style="position:absolute;left:2346px;width:800px;top:1790.14px;font:normal 25px/25px 'Liberation Sans', sans-serif;color:#fefefe;text-align:center;white-space:nowrap;will-change:transform;-webkit-text-stroke:0.6px #fefefe;">Settings</div>
<div style="position:absolute;left:2478px;top:1840px;width:536px;height:60px;background:#3c3e4a;border-radius:8px;"></div>
<div style="position:absolute;left:2346px;width:800px;top:1858.14px;font:normal 25px/25px 'Liberation Sans', sans-serif;color:#fefefe;text-align:center;white-space:nowrap;will-change:transform;-webkit-text-stroke:0.6px #fefefe;">Exit</div>
<div style="position:absolute;left:2478px;top:1636px;width:468px;height:60px;background:#3c3e4a;border-radius:8px;"></div>
<div style="position:absolute;left:2312px;width:800px;top:1653.34px;font:normal 25px/25px 'Liberation Sans', sans-serif;color:#fefefe;text-align:center;white-space:nowrap;will-change:transform;-webkit-text-stroke:0.6px #fefefe;">Start Virtual Camera</div>
<div style="position:absolute;left:2954px;top:1636px;width:60px;height:60px;background:#3c3e4a;border-radius:8px;"></div>
<svg style="position:absolute;left:2970px;top:1652px;overflow:visible" width="28" height="28" viewBox="0 0 28 28"><g transform="scale(1.0)"><circle cx="14" cy="14" r="11.4" fill="#fff"/><rect x="10.9" y="-0.1" width="6.2" height="8" rx="2.6" fill="#fff" transform="rotate(0 14 14)"/><rect x="10.9" y="-0.1" width="6.2" height="8" rx="2.6" fill="#fff" transform="rotate(45 14 14)"/><rect x="10.9" y="-0.1" width="6.2" height="8" rx="2.6" fill="#fff" transform="rotate(90 14 14)"/><rect x="10.9" y="-0.1" width="6.2" height="8" rx="2.6" fill="#fff" transform="rotate(135 14 14)"/><rect x="10.9" y="-0.1" width="6.2" height="8" rx="2.6" fill="#fff" transform="rotate(180 14 14)"/><rect x="10.9" y="-0.1" width="6.2" height="8" rx="2.6" fill="#fff" transform="rotate(225 14 14)"/><rect x="10.9" y="-0.1" width="6.2" height="8" rx="2.6" fill="#fff" transform="rotate(270 14 14)"/><rect x="10.9" y="-0.1" width="6.2" height="8" rx="2.6" fill="#fff" transform="rotate(315 14 14)"/><circle cx="14" cy="14" r="5.9" fill="#3c3e4a"/></g></svg>
<svg style="position:absolute;left:2206px;top:1916px;overflow:visible" width="60" height="42" viewBox="0 0 60 42"><g fill="none" stroke="#9a9893" stroke-width="3.1" stroke-linecap="round"><path d="M15.71 25.89 A9.2 9.2 0 0 1 18.14 14.95"/><path d="M32.02 17.40 A9.2 9.2 0 0 1 29.96 29.05"/><path d="M10.64 33.25 A17.5 17.5 0 0 1 11.68 9.63"/><path d="M38.21 11.71 A17.5 17.5 0 0 1 36.42 34.37"/></g><circle cx="24.05" cy="22.0" r="7.2" fill="#9a9893"/><path d="M12.079999999999998 37.25 L39.0 9.27" stroke="#1f2029" stroke-width="2.6"/><path d="M9.78 35.05 L36.7 7.07" stroke="#9a9893" stroke-width="3.3" stroke-linecap="round"/></svg>
<svg style="position:absolute;left:2430px;top:1916px;overflow:visible" width="40" height="42" viewBox="0 0 40 42"><circle cx="19.97" cy="22" r="10.05" fill="#9a9893"/><path d="M10.989999999999998 34.3 L31.64 13.1" stroke="#1f2029" stroke-width="2.2"/><path d="M8.7 32.07 L29.35 10.87" stroke="#9a9893" stroke-width="3.2" stroke-linecap="round"/></svg>
<div style="position:absolute;left:2262.6px;top:1927.53px;font:normal 23px/23px 'Liberation Sans', sans-serif;color:#fefefe;white-space:nowrap;will-change:transform;-webkit-text-stroke:0.6px #fefefe;">LIVE: 00:00:00</div>
<svg style="position:absolute;left:2437px;top:1924px;overflow:visible" width="26" height="30" viewBox="0 0 26 30"><circle cx="13" cy="15" r="10.5" fill="#9a9893"/><path d="M1.5 28 L24.5 2" stroke="#1f2029" stroke-width="4.5"/><path d="M1.5 28 L24.5 2" stroke="#9a9893" stroke-width="2.4" stroke-linecap="round"/></svg>
<div style="position:absolute;left:2482.5px;top:1927.03px;font:normal 23px/23px 'Liberation Sans', sans-serif;color:#fefefe;white-space:nowrap;will-change:transform;-webkit-text-stroke:0.6px #fefefe;">REC: 00:00:00</div>
<div style="position:absolute;left:2686px;top:1926.61px;font:normal 23.5px/23.5px 'Liberation Sans', sans-serif;color:#fefefe;white-space:nowrap;will-change:transform;-webkit-text-stroke:0.6px #fefefe;">CPU: 1.7%, 30.00 fps</div>
</body></html>
